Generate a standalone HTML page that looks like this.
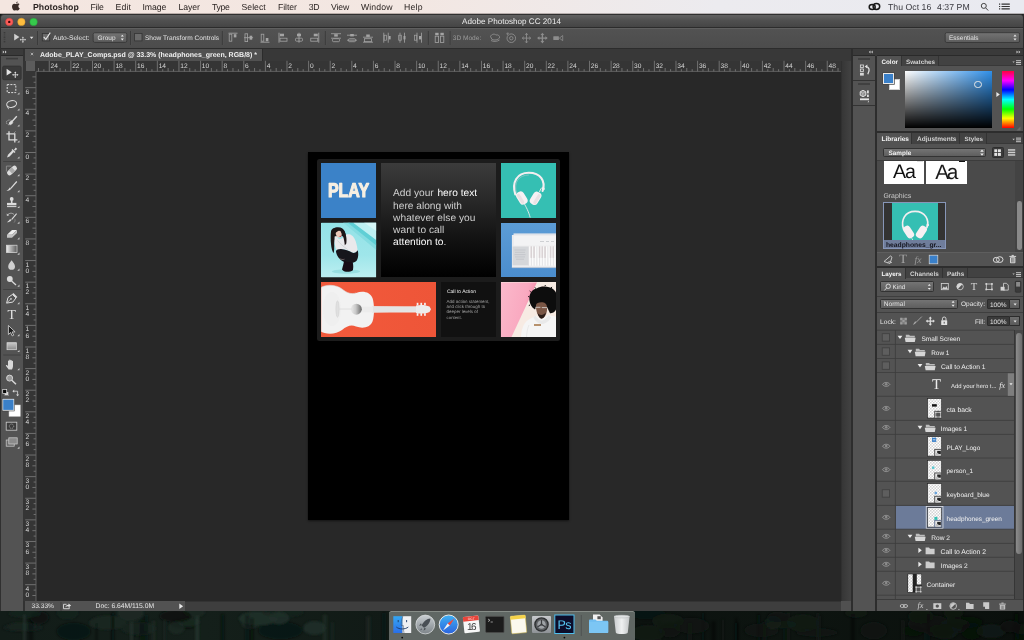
<!DOCTYPE html>
<html lang="en"><head><meta charset="utf-8"><title>Adobe Photoshop CC 2014</title>
<style>
html,body{margin:0;padding:0;}
body{text-rendering:geometricPrecision;width:1024px;height:640px;overflow:hidden;position:relative;background:#0d1512;font-family:"Liberation Sans",sans-serif;}
.b{position:absolute;box-sizing:border-box;}
.f{font-family:'Liberation Sans',sans-serif;white-space:pre;}
.fs{font-family:'Liberation Serif',serif;white-space:pre;}
svg{position:absolute;left:0;top:0;overflow:visible;}
</style></head><body>
<div class="b" style="left:0;top:600px;width:1024px;height:40px;background:linear-gradient(90deg,#121c18 0%,#141f1a 20%,#111a16 38%,#0c120f 62%,#0d1410 78%,#0a0f0c 100%);"></div>
<svg width="1024" height="640" viewBox="0 0 1024 640"><defs><filter id="tb" x="-5%" y="-50%" width="110%" height="200%"><feGaussianBlur stdDeviation="1.300"/></filter><clipPath id="cbg"><rect x="0" y="610" width="1024" height="30"/></clipPath></defs><g clip-path="url(#cbg)"><g filter="url(#tb)"><ellipse cx="954.9" cy="624.9" rx="14.5" ry="6.5" fill="#131e17" opacity="0.81"/><ellipse cx="184.4" cy="623.9" rx="14.3" ry="4.7" fill="#0a100e" opacity="0.74"/><ellipse cx="761.4" cy="630.3" rx="17.1" ry="7.1" fill="#111a14" opacity="0.48"/><ellipse cx="188.6" cy="622.2" rx="11.4" ry="4.2" fill="#1c2c24" opacity="0.72"/><ellipse cx="193.9" cy="612.1" rx="11.3" ry="5.5" fill="#1b2a24" opacity="0.66"/><ellipse cx="280.4" cy="630.5" rx="22.0" ry="9.0" fill="#0a100e" opacity="0.56"/><ellipse cx="781.3" cy="624.4" rx="15.2" ry="4.1" fill="#111a14" opacity="0.63"/><ellipse cx="873.8" cy="630.6" rx="13.4" ry="8.8" fill="#111a14" opacity="0.55"/><ellipse cx="957.8" cy="627.6" rx="8.7" ry="5.9" fill="#0f1813" opacity="0.48"/><ellipse cx="647.2" cy="613.9" rx="18.9" ry="5.3" fill="#0e1511" opacity="0.46"/><ellipse cx="953.5" cy="612.2" rx="9.9" ry="7.5" fill="#0f1813" opacity="0.81"/><ellipse cx="175.5" cy="616.2" rx="15.8" ry="6.2" fill="#0a100e" opacity="0.80"/><ellipse cx="1023.6" cy="633.4" rx="8.0" ry="8.3" fill="#090e0b" opacity="0.59"/><ellipse cx="913.8" cy="630.8" rx="10.9" ry="6.0" fill="#090e0b" opacity="0.50"/><ellipse cx="1022.8" cy="629.0" rx="11.0" ry="5.3" fill="#0e1511" opacity="0.82"/><ellipse cx="67.5" cy="612.3" rx="10.9" ry="7.2" fill="#172520" opacity="0.62"/><ellipse cx="991.3" cy="631.1" rx="14.8" ry="6.9" fill="#131e17" opacity="0.73"/><ellipse cx="314.5" cy="628.0" rx="11.2" ry="7.1" fill="#20312a" opacity="0.78"/><ellipse cx="971.8" cy="631.4" rx="10.8" ry="8.8" fill="#090e0b" opacity="0.49"/><ellipse cx="39.5" cy="617.6" rx="9.5" ry="6.6" fill="#0a100e" opacity="0.77"/><ellipse cx="258.3" cy="618.5" rx="19.5" ry="7.0" fill="#20312a" opacity="0.87"/><ellipse cx="1010.2" cy="626.4" rx="9.8" ry="6.4" fill="#090e0b" opacity="0.73"/><ellipse cx="282.5" cy="612.4" rx="20.8" ry="5.0" fill="#172520" opacity="0.64"/><ellipse cx="250.0" cy="623.7" rx="8.7" ry="5.4" fill="#20312a" opacity="0.49"/><ellipse cx="134.5" cy="628.1" rx="14.3" ry="5.7" fill="#15211d" opacity="0.71"/><ellipse cx="136.5" cy="632.0" rx="8.5" ry="4.1" fill="#0a100e" opacity="0.59"/><ellipse cx="25.0" cy="613.5" rx="16.4" ry="4.4" fill="#172520" opacity="0.59"/><ellipse cx="1033.3" cy="628.2" rx="9.1" ry="6.7" fill="#131e17" opacity="0.81"/><ellipse cx="945.3" cy="631.8" rx="12.9" ry="7.4" fill="#0f1813" opacity="0.87"/><ellipse cx="21.6" cy="626.6" rx="15.0" ry="4.1" fill="#1c2c24" opacity="0.71"/><ellipse cx="73.7" cy="631.4" rx="17.0" ry="9.0" fill="#0a100e" opacity="0.60"/><ellipse cx="965.4" cy="622.2" rx="17.7" ry="6.3" fill="#090e0b" opacity="0.49"/><ellipse cx="773.2" cy="622.6" rx="8.4" ry="7.0" fill="#131e17" opacity="0.88"/><ellipse cx="107.9" cy="622.7" rx="18.9" ry="7.3" fill="#1b2a24" opacity="0.62"/><ellipse cx="139.5" cy="628.6" rx="16.6" ry="6.6" fill="#172520" opacity="0.75"/><ellipse cx="921.0" cy="616.4" rx="12.6" ry="7.3" fill="#0f1813" opacity="0.81"/><ellipse cx="777.8" cy="616.8" rx="10.8" ry="5.1" fill="#0e1511" opacity="0.54"/><ellipse cx="130.5" cy="612.9" rx="12.9" ry="8.5" fill="#1b2a24" opacity="0.88"/><ellipse cx="279.0" cy="618.1" rx="10.4" ry="6.3" fill="#20312a" opacity="0.82"/><ellipse cx="691.7" cy="625.7" rx="18.0" ry="8.2" fill="#0e1511" opacity="0.48"/><ellipse cx="22.9" cy="627.6" rx="20.2" ry="4.2" fill="#15211d" opacity="0.61"/><ellipse cx="667.9" cy="620.9" rx="15.9" ry="7.2" fill="#131e17" opacity="0.46"/><ellipse cx="856.2" cy="613.0" rx="11.3" ry="4.7" fill="#111a14" opacity="0.65"/><ellipse cx="647.7" cy="633.1" rx="17.2" ry="8.0" fill="#131e17" opacity="0.54"/><ellipse cx="176.5" cy="627.7" rx="8.2" ry="6.4" fill="#20312a" opacity="0.55"/><ellipse cx="802.8" cy="623.0" rx="15.6" ry="8.7" fill="#131e17" opacity="0.63"/><ellipse cx="816.8" cy="632.5" rx="20.7" ry="4.4" fill="#0f1813" opacity="0.51"/><ellipse cx="940.0" cy="631.3" rx="13.3" ry="6.8" fill="#0e1511" opacity="0.66"/><ellipse cx="670.0" cy="630.0" rx="10.9" ry="7.6" fill="#111a14" opacity="0.55"/><ellipse cx="929.6" cy="623.8" rx="21.7" ry="8.9" fill="#0e1511" opacity="0.57"/><rect x="735.5" y="618.1" width="1.6" height="30" fill="#0c1512" opacity="0.54"/><rect x="786.7" y="612.3" width="3.2" height="30" fill="#141d17" opacity="0.37"/><rect x="819.1" y="616.0" width="2.1" height="30" fill="#141d17" opacity="0.40"/><rect x="152.2" y="620.7" width="3.3" height="30" fill="#222f29" opacity="0.50"/><rect x="901.1" y="620.3" width="3.5" height="30" fill="#141d17" opacity="0.50"/><rect x="851.1" y="614.0" width="3.5" height="30" fill="#080d0b" opacity="0.44"/><rect x="687.4" y="622.4" width="4.8" height="30" fill="#141d17" opacity="0.46"/><rect x="144.5" y="615.3" width="3.4" height="30" fill="#0c1512" opacity="0.54"/><rect x="28.4" y="618.2" width="4.9" height="30" fill="#080d0b" opacity="0.39"/><rect x="95.5" y="623.2" width="2.1" height="30" fill="#0c1512" opacity="0.44"/><rect x="130.0" y="621.8" width="3.0" height="30" fill="#2d3c35" opacity="0.53"/><rect x="111.2" y="612.4" width="3.0" height="30" fill="#080d0b" opacity="0.62"/><rect x="23.3" y="614.7" width="2.2" height="30" fill="#2d3c35" opacity="0.60"/><rect x="250.3" y="618.0" width="3.2" height="30" fill="#080d0b" opacity="0.57"/><rect x="734.9" y="622.5" width="4.0" height="30" fill="#080d0b" opacity="0.49"/><rect x="163.6" y="619.6" width="2.2" height="30" fill="#222f29" opacity="0.43"/><rect x="139.7" y="619.5" width="4.7" height="30" fill="#0a100e" opacity="0.46"/><rect x="322.5" y="614.6" width="4.7" height="30" fill="#28362f" opacity="0.40"/><rect x="245.1" y="615.1" width="4.0" height="30" fill="#0c1512" opacity="0.54"/><rect x="721.8" y="619.5" width="2.2" height="30" fill="#141d17" opacity="0.38"/><rect x="366.2" y="616.3" width="4.4" height="30" fill="#222f29" opacity="0.62"/><rect x="702.1" y="612.8" width="2.2" height="30" fill="#0a100e" opacity="0.62"/><rect x="926.8" y="614.3" width="3.2" height="30" fill="#0a100e" opacity="0.64"/><rect x="1014.1" y="613.1" width="4.7" height="30" fill="#080d0b" opacity="0.51"/><rect x="783.1" y="617.6" width="2.6" height="30" fill="#0c1512" opacity="0.42"/><rect x="382.1" y="612.5" width="3.7" height="30" fill="#0c1512" opacity="0.51"/><rect x="757.1" y="614.3" width="2.9" height="30" fill="#080d0b" opacity="0.63"/><rect x="331.5" y="622.1" width="1.8" height="30" fill="#222f29" opacity="0.68"/><rect x="195.5" y="616.1" width="3.5" height="30" fill="#2d3c35" opacity="0.67"/><rect x="762.3" y="621.8" width="4.2" height="30" fill="#0c1512" opacity="0.66"/><rect x="711.5" y="621.2" width="4.2" height="30" fill="#080d0b" opacity="0.41"/><rect x="816.5" y="613.2" width="2.6" height="30" fill="#141d17" opacity="0.70"/><rect x="924.4" y="615.3" width="1.7" height="30" fill="#141d17" opacity="0.45"/><rect x="221.2" y="614.2" width="2.9" height="30" fill="#080d0b" opacity="0.70"/><rect x="657.7" y="621.1" width="4.0" height="30" fill="#141d17" opacity="0.36"/></g></g></svg>
<div class="b" style="left:0.00px;top:0.00px;width:1024.00px;height:14.00px;background:linear-gradient(90deg,#f4e6e0 0%,#f3e7e2 40%,#ecebef 70%,#e9eaf0 100%);"></div>
<div class="b" style="left:0.00px;top:13.00px;width:1024.00px;height:1.00px;background:rgba(70,58,55,0.33);"></div>
<svg width="1024" height="14" viewBox="0 0 1024 14"><g fill="#3a2c27"><path d="M17.9 3.6c-.8 0-1.4.5-1.9.5s-1-.45-1.7-.45c-1.2 0-2.3 1-2.3 2.9 0 1.8 1.2 4 2.300 4 .6 0 .9-.4 1.700-.4s1 .4 1.700.4c.9 0 1.700-1.300 2.100-2.300-1-.45-1.400-1.300-1.400-2.100 0-.9.500-1.600 1.200-2-.5-.500-1.100-.55-1.700-.55z"/><path d="M16.100 3.200c.1-.9.800-1.700 1.600-1.800.1.900-.7 1.800-1.600 1.800z"/></g></svg>
<svg width="1024" height="14" viewBox="0 0 1024 14">
<g fill="none" stroke="#1a1a1a" stroke-width="1.5"><ellipse cx="872.2" cy="6.9" rx="3" ry="2.5"/><ellipse cx="876.4" cy="6.500" rx="3.300" ry="2.900"/></g>
<g fill="none" stroke="#444" stroke-width="1"><circle cx="983.800" cy="5.900" r="2.500"/><path d="M985.600 7.800l2.600 2.700"/></g>
<g stroke="#333" stroke-width="1.1"><path d="M1001.500 4.100h8.300M1001.500 6.500h8.300M1001.500 8.900h8.300"/><path d="M999 4.100h1.200M999 6.500h1.200M999 8.900h1.200"/></g>
</svg>
<div class="b" style="left:0.00px;top:14.00px;width:1024.00px;height:597.00px;background:#303030;border-radius:3.500px 3.500px 0 0;"></div>
<div class="b" style="left:0.60px;top:15.00px;width:1022.80px;height:12.00px;background:linear-gradient(180deg,#626262 0%,#505050 45%,#454545 100%);border-radius:3px 3px 0 0;"></div>
<svg width="1024" height="640" viewBox="0 0 1024 640"><circle cx="9.250" cy="21.900" r="3.700" fill="#fb5c58" stroke="#d9443f" stroke-width=".5"/><circle cx="9.250" cy="21.900" r="1.200" fill="#3b0608"/><circle cx="21.400" cy="21.900" r="3.700" fill="#fdbd3f" stroke="#de9f2c" stroke-width=".5"/><circle cx="33.600" cy="21.900" r="3.700" fill="#36c94c" stroke="#27aa3a" stroke-width=".5"/></svg>
<div class="b" style="left:0.60px;top:27.60px;width:1022.80px;height:20.40px;background:linear-gradient(180deg,#525252 0%,#4c4c4c 100%);border-top:0.6px solid #5f5f5f;"></div>
<div class="b" style="left:0.60px;top:27.00px;width:1022.80px;height:0.60px;background:#2c2c2c;"></div>
<svg width="1024" height="50" viewBox="0 0 1024 50"><g fill="#3a3a3a"><rect x="3.700" y="32" width="1.6" height="1.400"/><rect x="3.700" y="36.5" width="1.6" height="1.400"/><rect x="3.700" y="41" width="1.6" height="1.400"/><rect x="3.700" y="34.200" width="1.6" height="1.400" opacity=".6"/><rect x="3.700" y="38.700" width="1.6" height="1.400" opacity=".6"/></g><g transform="translate(14.2,33.7) scale(1.0)" fill="#d0d0d0" stroke="none"><path d="M0 0 L0 6.800 L5.200 3.400 Z"/><path d="M6.399999999999999 6.0H11.0M8.7 3.7V8.3" stroke="#d0d0d0" stroke-width=".8" fill="none"/><path d="M5.499999999999999 6.0l1.300-1.100v2.200zM11.9 6.0l-1.300-1.100v2.200zM8.7 2.8000000000000003l-1.100 1.300h2.200zM8.7 9.200000000000001l-1.100-1.300h2.200z"/></g><path d="M29.800 36.800h3.600l-1.800 2.200z" fill="#e0e0e0"/><rect x="37.0" y="31" width="0.9" height="14" fill="#383838"/><rect x="37.9" y="31" width="0.6" height="14" fill="#5a5a5a" opacity=".6"/><rect x="130.0" y="31" width="0.9" height="14" fill="#383838"/><rect x="130.9" y="31" width="0.6" height="14" fill="#5a5a5a" opacity=".6"/><rect x="221.9" y="31" width="0.9" height="14" fill="#383838"/><rect x="222.8" y="31" width="0.6" height="14" fill="#5a5a5a" opacity=".6"/><rect x="324.9" y="31" width="0.9" height="14" fill="#383838"/><rect x="325.79999999999995" y="31" width="0.6" height="14" fill="#5a5a5a" opacity=".6"/><rect x="427.9" y="31" width="0.9" height="14" fill="#383838"/><rect x="428.79999999999995" y="31" width="0.6" height="14" fill="#5a5a5a" opacity=".6"/><rect x="449.75" y="31" width="0.9" height="14" fill="#383838"/><rect x="450.65" y="31" width="0.6" height="14" fill="#5a5a5a" opacity=".6"/><rect x="42.300" y="33.5" width="7.400" height="7.400" fill="#6a6a6a" stroke="#333" stroke-width=".8"/><path d="M43.700 36.900l2.100 2.500 4.500-6.800" fill="none" stroke="#e6e6e6" stroke-width="1.050"/><rect x="134.600" y="33.5" width="7.400" height="7.400" fill="#6a6a6a" stroke="#333" stroke-width=".8"/><defs><linearGradient id="dd" x1="0" y1="0" x2="0" y2="1"><stop offset="0" stop-color="#747474"/><stop offset="1" stop-color="#5c5c5c"/></linearGradient></defs><rect x="93.200" y="32.800" width="33.600" height="9.600" rx="1.5" fill="url(#dd)" stroke="#333" stroke-width=".8"/><path d="M120.800 36.600l1.500-1.900 1.500 1.900zM120.800 38.600l1.500 1.900 1.500-1.900z" fill="#ededed"/><path d="M228.5 33.2h9" stroke="#a4a4a4" stroke-width=".9"/><rect x="229.2" y="34.2" width="2.600" height="7" fill="none" stroke="#a4a4a4" stroke-width=".8"/><rect x="233.8" y="34.2" width="2.600" height="3.200" fill="#a4a4a4"/><path d="M244.1 37.7h9" stroke="#a4a4a4" stroke-width=".9"/><rect x="245.0" y="33.800000000000004" width="2.600" height="7.800" fill="none" stroke="#a4a4a4" stroke-width=".8"/><rect x="249.6" y="35.7" width="2.600" height="4" fill="#a4a4a4"/><path d="M260.5 42.2h9" stroke="#a4a4a4" stroke-width=".9"/><rect x="261.2" y="34.2" width="2.600" height="7" fill="none" stroke="#a4a4a4" stroke-width=".8"/><rect x="265.8" y="38.0" width="2.600" height="3.200" fill="#a4a4a4"/><path d="M279 32.7v10" stroke="#a4a4a4" stroke-width=".9"/><rect x="280" y="33.7" width="4" height="2.600" fill="#a4a4a4"/><rect x="280" y="38.2" width="7" height="3" fill="none" stroke="#a4a4a4" stroke-width=".8"/><path d="M299 32.7v10" stroke="#a4a4a4" stroke-width=".9"/><rect x="297" y="33.7" width="4" height="2.600" fill="#a4a4a4"/><rect x="295.5" y="38.2" width="7" height="3" rx="1" fill="none" stroke="#a4a4a4" stroke-width=".8"/><path d="M318.75 32.7v10" stroke="#a4a4a4" stroke-width=".9"/><rect x="313.75" y="33.7" width="4" height="2.600" fill="#a4a4a4"/><rect x="310.75" y="38.2" width="7" height="3" fill="none" stroke="#a4a4a4" stroke-width=".8"/><path d="M331 33.7h10M331 38.2h10" stroke="#a4a4a4" stroke-width=".8"/><rect x="334.2" y="34.2" width="3.600" height="2.400" fill="#a4a4a4"/><rect x="332.5" y="38.7" width="7" height="3" rx="1" fill="none" stroke="#a4a4a4" stroke-width=".8"/><path d="M347 35.2h10M347 40.2h10" stroke="#a4a4a4" stroke-width=".8"/><rect x="350.2" y="34.0" width="3.600" height="2.400" fill="#a4a4a4"/><rect x="348.5" y="38.7" width="7" height="3" rx="1" fill="none" stroke="#a4a4a4" stroke-width=".8"/><path d="M363 37.2h10M363 42.2h10" stroke="#a4a4a4" stroke-width=".8"/><rect x="366.2" y="34.5" width="3.600" height="2.400" fill="#a4a4a4"/><rect x="364.5" y="38.7" width="7" height="3" fill="none" stroke="#a4a4a4" stroke-width=".8"/><path d="M383.75 32.7v10M388.25 32.7v10" stroke="#a4a4a4" stroke-width=".8"/><rect x="384.15" y="35.2" width="2.400" height="5" fill="none" stroke="#a4a4a4" stroke-width=".7"/><rect x="388.65" y="36.0" width="2" height="3.400" fill="#a4a4a4"/><path d="M400 32.7v10M404.5 32.7v10" stroke="#a4a4a4" stroke-width=".8"/><rect x="398.7" y="35.2" width="2.600" height="5" fill="none" stroke="#a4a4a4" stroke-width=".7"/><rect x="403.5" y="36.0" width="2" height="3.400" fill="#a4a4a4"/><path d="M417 32.7v10M421.5 32.7v10" stroke="#a4a4a4" stroke-width=".8"/><rect x="414.4" y="35.2" width="2.400" height="5" fill="none" stroke="#a4a4a4" stroke-width=".7"/><rect x="419" y="36.0" width="2.200" height="3.400" fill="#a4a4a4"/><rect x="435.2" y="32.800000000000004" width="3.400" height="2.400" fill="#a4a4a4"/><rect x="440.4" y="32.800000000000004" width="3.400" height="2.400" fill="#a4a4a4"/><rect x="435.2" y="36.2" width="3.400" height="6.200" fill="none" stroke="#a4a4a4" stroke-width=".8"/><rect x="440.4" y="36.2" width="3.400" height="6.200" fill="none" stroke="#a4a4a4" stroke-width=".8"/><g fill="none" stroke="#8d8d8d" stroke-width=".9"><path d="M490.500 36.500c1-2.500 4-3 5.500-1.500 2-.7 4 .8 3.500 3-1.500 2-5 2.500-7.500 1.500z"/><path d="M491 40.500c2 1.300 6 1.300 8.500-.5"/><circle cx="511.300" cy="38.200" r="4.300"/><circle cx="511.300" cy="38.200" r="1.700"/><path d="M507.500 35l-.6-1.900 2 .2"/><path d="M526.500 33.300v9.600M522.300 38.100h8.400M526.500 33.300l-1.300 1.500M526.500 33.300l1.300 1.500M526.500 42.900l-1.300-1.500M526.500 42.900l1.300-1.500M522.300 38.100l1.500-1.300M522.300 38.100l1.500 1.300M530.700 38.100l-1.500-1.300M530.700 38.100l-1.500 1.300"/></g><g fill="#8d8d8d"><path d="M542.400 32.800l1.900 2.300h-1.200v2.300h2.300v-1.200l2.300 1.900-2.300 1.900v-1.200h-2.300v2.300h1.200l-1.900 2.300-1.900-2.300h1.200v-2.300h-2.300v1.200l-2.300-1.900 2.300-1.900v1.200h2.300v-2.300h-1.200z"/><rect x="553.300" y="36.200" width="5.600" height="3.800" rx=".5"/><path d="M559.400 38.100l3.300-2.600v5.200z" fill="none" stroke="#8d8d8d" stroke-width=".8"/></g><rect x="945.200" y="32.700" width="74.400" height="9.800" rx="1.5" fill="url(#dd)" stroke="#333" stroke-width=".8"/><path d="M1013.500 36.500l1.500-1.900 1.500 1.900zM1013.500 38.600l1.500 1.900 1.500-1.900z" fill="#ededed"/></svg>
<div class="b" style="left:0.60px;top:48.00px;width:22.70px;height:563.00px;background:#535353;"></div>
<div class="b" style="left:0.60px;top:48.00px;width:22.70px;height:7.80px;background:#3a3a3a;border-bottom:0.7px solid #2a2a2a;"></div>
<div class="b" style="left:23.30px;top:48.00px;width:1.90px;height:563.00px;background:#323232;"></div>
<div class="b" style="left:25.20px;top:48.00px;width:825.80px;height:12.80px;background:#383838;"></div>
<div class="b" style="left:25.20px;top:48.60px;width:238.20px;height:12.20px;background:#515151;border-right:0.8px solid #2c2c2c;"></div>
<div class="b" style="left:25.20px;top:48.00px;width:825.80px;height:0.70px;background:#2c2c2c;"></div>
<div class="b" style="left:25.20px;top:60.80px;width:815.80px;height:11.00px;background:#353535;"></div>
<div class="b" style="left:23.30px;top:60.80px;width:12.90px;height:540.20px;background:#353535;"></div>
<div class="b" style="left:25.80px;top:61.30px;width:9.40px;height:9.30px;background:#5c5c5c;"></div>
<div class="b" style="left:841.30px;top:60.80px;width:9.70px;height:11.00px;background:#454545;"></div>
<div class="b" style="left:36.00px;top:71.80px;width:805.00px;height:529.20px;background:#282828;"></div>
<div class="b" style="left:841.00px;top:60.80px;width:10.00px;height:540.20px;background:linear-gradient(90deg,#363636,#424242);border-left:0.6px solid #303030;"></div>
<div class="b" style="left:25.20px;top:601.00px;width:825.80px;height:10.00px;background:#3e3e3e;border-top:0.6px solid #333;"></div>
<div class="b" style="left:25.20px;top:601.40px;width:159.80px;height:9.60px;background:#525252;"></div>
<div class="b" style="left:841.00px;top:601.00px;width:10.00px;height:10.00px;background:#505050;"></div>
<div class="b" style="left:851.00px;top:48.00px;width:2.00px;height:563.00px;background:#2d2d2d;"></div>
<svg width="1024" height="640" viewBox="0 0 1024 640"><g stroke="#8a8a8a" stroke-width="0.7"><path d="M38.48 68.00V71.400"/><path d="M43.88 69.20V71.400"/><path d="M49.28 60.80V71.400"/><path d="M54.68 69.20V71.400"/><path d="M60.09 68.00V71.400"/><path d="M65.49 69.20V71.400"/><path d="M70.89 60.80V71.400"/><path d="M76.29 69.20V71.400"/><path d="M81.70 68.00V71.400"/><path d="M87.10 69.20V71.400"/><path d="M92.50 60.80V71.400"/><path d="M97.90 69.20V71.400"/><path d="M103.31 68.00V71.400"/><path d="M108.71 69.20V71.400"/><path d="M114.11 60.80V71.400"/><path d="M119.51 69.20V71.400"/><path d="M124.92 68.00V71.400"/><path d="M130.32 69.20V71.400"/><path d="M135.72 60.80V71.400"/><path d="M141.12 69.20V71.400"/><path d="M146.53 68.00V71.400"/><path d="M151.93 69.20V71.400"/><path d="M157.33 60.80V71.400"/><path d="M162.73 69.20V71.400"/><path d="M168.14 68.00V71.400"/><path d="M173.54 69.20V71.400"/><path d="M178.94 60.80V71.400"/><path d="M184.34 69.20V71.400"/><path d="M189.75 68.00V71.400"/><path d="M195.15 69.20V71.400"/><path d="M200.55 60.80V71.400"/><path d="M205.95 69.20V71.400"/><path d="M211.36 68.00V71.400"/><path d="M216.76 69.20V71.400"/><path d="M222.16 60.80V71.400"/><path d="M227.56 69.20V71.400"/><path d="M232.97 68.00V71.400"/><path d="M238.37 69.20V71.400"/><path d="M243.77 60.80V71.400"/><path d="M249.17 69.20V71.400"/><path d="M254.58 68.00V71.400"/><path d="M259.98 69.20V71.400"/><path d="M265.38 60.80V71.400"/><path d="M270.78 69.20V71.400"/><path d="M276.19 68.00V71.400"/><path d="M281.59 69.20V71.400"/><path d="M286.99 60.80V71.400"/><path d="M292.39 69.20V71.400"/><path d="M297.80 68.00V71.400"/><path d="M303.20 69.20V71.400"/><path d="M308.60 60.80V71.400"/><path d="M314.00 69.20V71.400"/><path d="M319.41 68.00V71.400"/><path d="M324.81 69.20V71.400"/><path d="M330.21 60.80V71.400"/><path d="M335.61 69.20V71.400"/><path d="M341.02 68.00V71.400"/><path d="M346.42 69.20V71.400"/><path d="M351.82 60.80V71.400"/><path d="M357.22 69.20V71.400"/><path d="M362.62 68.00V71.400"/><path d="M368.03 69.20V71.400"/><path d="M373.43 60.80V71.400"/><path d="M378.83 69.20V71.400"/><path d="M384.24 68.00V71.400"/><path d="M389.64 69.20V71.400"/><path d="M395.04 60.80V71.400"/><path d="M400.44 69.20V71.400"/><path d="M405.85 68.00V71.400"/><path d="M411.25 69.20V71.400"/><path d="M416.65 60.80V71.400"/><path d="M422.05 69.20V71.400"/><path d="M427.46 68.00V71.400"/><path d="M432.86 69.20V71.400"/><path d="M438.26 60.80V71.400"/><path d="M443.66 69.20V71.400"/><path d="M449.07 68.00V71.400"/><path d="M454.47 69.20V71.400"/><path d="M459.87 60.80V71.400"/><path d="M465.27 69.20V71.400"/><path d="M470.68 68.00V71.400"/><path d="M476.08 69.20V71.400"/><path d="M481.48 60.80V71.400"/><path d="M486.88 69.20V71.400"/><path d="M492.29 68.00V71.400"/><path d="M497.69 69.20V71.400"/><path d="M503.09 60.80V71.400"/><path d="M508.49 69.20V71.400"/><path d="M513.89 68.00V71.400"/><path d="M519.30 69.20V71.400"/><path d="M524.70 60.80V71.400"/><path d="M530.10 69.20V71.400"/><path d="M535.50 68.00V71.400"/><path d="M540.91 69.20V71.400"/><path d="M546.31 60.80V71.400"/><path d="M551.71 69.20V71.400"/><path d="M557.12 68.00V71.400"/><path d="M562.52 69.20V71.400"/><path d="M567.92 60.80V71.400"/><path d="M573.32 69.20V71.400"/><path d="M578.73 68.00V71.400"/><path d="M584.13 69.20V71.400"/><path d="M589.53 60.80V71.400"/><path d="M594.93 69.20V71.400"/><path d="M600.34 68.00V71.400"/><path d="M605.74 69.20V71.400"/><path d="M611.14 60.80V71.400"/><path d="M616.54 69.20V71.400"/><path d="M621.94 68.00V71.400"/><path d="M627.35 69.20V71.400"/><path d="M632.75 60.80V71.400"/><path d="M638.15 69.20V71.400"/><path d="M643.56 68.00V71.400"/><path d="M648.96 69.20V71.400"/><path d="M654.36 60.80V71.400"/><path d="M659.76 69.20V71.400"/><path d="M665.16 68.00V71.400"/><path d="M670.57 69.20V71.400"/><path d="M675.97 60.80V71.400"/><path d="M681.37 69.20V71.400"/><path d="M686.78 68.00V71.400"/><path d="M692.18 69.20V71.400"/><path d="M697.58 60.80V71.400"/><path d="M702.98 69.20V71.400"/><path d="M708.38 68.00V71.400"/><path d="M713.79 69.20V71.400"/><path d="M719.19 60.80V71.400"/><path d="M724.59 69.20V71.400"/><path d="M730.00 68.00V71.400"/><path d="M735.40 69.20V71.400"/><path d="M740.80 60.80V71.400"/><path d="M746.20 69.20V71.400"/><path d="M751.61 68.00V71.400"/><path d="M757.01 69.20V71.400"/><path d="M762.41 60.80V71.400"/><path d="M767.81 69.20V71.400"/><path d="M773.22 68.00V71.400"/><path d="M778.62 69.20V71.400"/><path d="M784.02 60.80V71.400"/><path d="M789.42 69.20V71.400"/><path d="M794.83 68.00V71.400"/><path d="M800.23 69.20V71.400"/><path d="M805.63 60.80V71.400"/><path d="M811.03 69.20V71.400"/><path d="M816.43 68.00V71.400"/><path d="M821.84 69.20V71.400"/><path d="M827.24 60.80V71.400"/><path d="M832.64 69.20V71.400"/><path d="M838.04 68.00V71.400"/><path d="M32.40 76.87H35.800"/><path d="M33.60 82.27H35.800"/><path d="M25.20 87.67H35.800"/><path d="M33.60 93.07H35.800"/><path d="M32.40 98.47H35.800"/><path d="M33.60 103.88H35.800"/><path d="M25.20 109.28H35.800"/><path d="M33.60 114.68H35.800"/><path d="M32.40 120.09H35.800"/><path d="M33.60 125.49H35.800"/><path d="M25.20 130.89H35.800"/><path d="M33.60 136.29H35.800"/><path d="M32.40 141.69H35.800"/><path d="M33.60 147.10H35.800"/><path d="M25.20 152.50H35.800"/><path d="M33.60 157.90H35.800"/><path d="M32.40 163.31H35.800"/><path d="M33.60 168.71H35.800"/><path d="M25.20 174.11H35.800"/><path d="M33.60 179.51H35.800"/><path d="M32.40 184.91H35.800"/><path d="M33.60 190.32H35.800"/><path d="M25.20 195.72H35.800"/><path d="M33.60 201.12H35.800"/><path d="M32.40 206.53H35.800"/><path d="M33.60 211.93H35.800"/><path d="M25.20 217.33H35.800"/><path d="M33.60 222.73H35.800"/><path d="M32.40 228.13H35.800"/><path d="M33.60 233.54H35.800"/><path d="M25.20 238.94H35.800"/><path d="M33.60 244.34H35.800"/><path d="M32.40 249.75H35.800"/><path d="M33.60 255.15H35.800"/><path d="M25.20 260.55H35.800"/><path d="M33.60 265.95H35.800"/><path d="M32.40 271.36H35.800"/><path d="M33.60 276.76H35.800"/><path d="M25.20 282.16H35.800"/><path d="M33.60 287.56H35.800"/><path d="M32.40 292.97H35.800"/><path d="M33.60 298.37H35.800"/><path d="M25.20 303.77H35.800"/><path d="M33.60 309.17H35.800"/><path d="M32.40 314.57H35.800"/><path d="M33.60 319.98H35.800"/><path d="M25.20 325.38H35.800"/><path d="M33.60 330.78H35.800"/><path d="M32.40 336.19H35.800"/><path d="M33.60 341.59H35.800"/><path d="M25.20 346.99H35.800"/><path d="M33.60 352.39H35.800"/><path d="M32.40 357.79H35.800"/><path d="M33.60 363.20H35.800"/><path d="M25.20 368.60H35.800"/><path d="M33.60 374.00H35.800"/><path d="M32.40 379.40H35.800"/><path d="M33.60 384.81H35.800"/><path d="M25.20 390.21H35.800"/><path d="M33.60 395.61H35.800"/><path d="M32.40 401.01H35.800"/><path d="M33.60 406.42H35.800"/><path d="M25.20 411.82H35.800"/><path d="M33.60 417.22H35.800"/><path d="M32.40 422.62H35.800"/><path d="M33.60 428.03H35.800"/><path d="M25.20 433.43H35.800"/><path d="M33.60 438.83H35.800"/><path d="M32.40 444.24H35.800"/><path d="M33.60 449.64H35.800"/><path d="M25.20 455.04H35.800"/><path d="M33.60 460.44H35.800"/><path d="M32.40 465.84H35.800"/><path d="M33.60 471.25H35.800"/><path d="M25.20 476.65H35.800"/><path d="M33.60 482.05H35.800"/><path d="M32.40 487.45H35.800"/><path d="M33.60 492.86H35.800"/><path d="M25.20 498.26H35.800"/><path d="M33.60 503.66H35.800"/><path d="M32.40 509.06H35.800"/><path d="M33.60 514.47H35.800"/><path d="M25.20 519.87H35.800"/><path d="M33.60 525.27H35.800"/><path d="M32.40 530.67H35.800"/><path d="M33.60 536.08H35.800"/><path d="M25.20 541.48H35.800"/><path d="M33.60 546.88H35.800"/><path d="M32.40 552.28H35.800"/><path d="M33.60 557.69H35.800"/><path d="M25.20 563.09H35.800"/><path d="M33.60 568.49H35.800"/><path d="M32.40 573.89H35.800"/><path d="M33.60 579.30H35.800"/><path d="M25.20 584.70H35.800"/><path d="M33.60 590.10H35.800"/><path d="M32.40 595.50H35.800"/></g><path d="M36.200 71.400H841" stroke="#777" stroke-width=".6"/><path d="M36 71.800V601" stroke="#777" stroke-width=".7"/></svg>
<svg width="1024" height="640" viewBox="0 0 1024 640"><path d="M61 602v9" stroke="#3a3a3a" stroke-width=".8"/><g fill="none" stroke="#d8d8d8" stroke-width=".9"><path d="M66.500 604.300h-3v4.400h5.800v-1.500"/></g><path d="M65.300 607.500c.3-2 1.600-2.800 3.200-2.800v-1.200l2.600 2-2.600 2v-1.200c-1.400 0-2.400.2-3.200 1.200z" fill="#e0e0e0"/><path d="M179.300 603.500l3.800 2.700-3.800 2.700z" fill="#e8e8e8"/></svg>
<div class="b" style="left:308.40px;top:152.40px;width:260.40px;height:367.85px;background:#000;box-shadow:0 0.6px 2px rgba(0,0,0,.55);"></div>
<div class="b" style="left:317.40px;top:159.30px;width:242.80px;height:181.90px;background:#1c1c1c;border-radius:2.500px;"></div>
<div class="b" style="left:380.80px;top:162.60px;width:115.20px;height:114.60px;background:linear-gradient(180deg,#3b3b3b 0%,#2a2a2a 30%,#101010 70%,#000 100%);"></div>
<div class="b" style="left:321.20px;top:162.50px;width:55.10px;height:55.00px;background:#3b82c8;"></div>
<div class="b" style="left:500.80px;top:162.50px;width:55.20px;height:55.00px;background:#35bfb3;"></div>
<div class="b" style="left:321.20px;top:222.60px;width:55.10px;height:54.90px;background:#a5e6ea;"></div>
<div class="b" style="left:500.80px;top:222.60px;width:55.20px;height:54.90px;background:linear-gradient(180deg,#5c9cd6,#4b8dcd);"></div>
<div class="b" style="left:321.20px;top:282.20px;width:114.80px;height:54.80px;background:linear-gradient(90deg,#f25a3c,#ee5538);"></div>
<div class="b" style="left:441.00px;top:282.20px;width:55.00px;height:54.80px;background:#111;"></div>
<div class="b" style="left:500.80px;top:282.20px;width:55.20px;height:54.80px;background:#f7ebe3;"></div>
<svg width="1024" height="640" viewBox="0 0 1024 640"><defs><clipPath id="cHP"><rect x="500.800" y="162.500" width="55.200" height="55"/></clipPath><clipPath id="cP1"><rect x="321.200" y="222.600" width="55.100" height="54.900"/></clipPath><clipPath id="cKB"><rect x="500.800" y="222.600" width="55.200" height="54.900"/></clipPath><clipPath id="cGT"><rect x="321.200" y="282.200" width="114.800" height="54.800"/></clipPath><clipPath id="cP2"><rect x="500.800" y="282.200" width="55.200" height="54.800"/></clipPath><linearGradient id="pk" x1="0" y1="0" x2="1" y2="0.35"><stop offset="0" stop-color="#fbb9cb"/><stop offset=".7" stop-color="#f9a9c0"/><stop offset="1" stop-color="#f48aa6"/></linearGradient><linearGradient id="hole" x1="0" y1="0" x2="1" y2="0"><stop offset="0" stop-color="#ececec"/><stop offset=".45" stop-color="#c8c8c8"/><stop offset="1" stop-color="#6a6a6a"/></linearGradient><linearGradient id="p1bg" x1="0" y1="0" x2="0" y2="1"><stop offset="0" stop-color="#93e2e7"/><stop offset=".6" stop-color="#9fe6ea"/><stop offset="1" stop-color="#bdeff1"/></linearGradient><filter id="bl1"><feGaussianBlur stdDeviation="0.35"/></filter></defs><g clip-path="url(#cHP)" filter="url(#bl1)"><path d="M515.300 194.500 C511.500 182 517 172.800 528.800 172.800 C540.500 172.800 546 181 542.600 191" fill="none" stroke="#f3eef0" stroke-width="2.100" stroke-linecap="round"/><path d="M516.600 193 C513.500 183 518.500 175 528.800 175" fill="none" stroke="#d9cfd3" stroke-width=".6" opacity=".7"/><circle cx="543.300" cy="188.700" r="1.500" fill="#f5f0f2"/><path d="M539.500 192 C540.500 189 541.500 187.500 543 187" fill="none" stroke="#efe8ea" stroke-width="1"/><g transform="rotate(-32 521.800 198)"><rect x="517.600" y="191.200" width="8.400" height="13.600" rx="3.600" fill="#f6f1f3"/><rect x="518.700" y="192.400" width="3.200" height="11.200" rx="1.600" fill="#e4dadd" opacity=".7"/></g><g transform="rotate(32 535.600 198.300)"><rect x="531.400" y="191.500" width="8.400" height="13.600" rx="3.600" fill="#f6f1f3"/><rect x="535.600" y="192.700" width="3.200" height="11.200" rx="1.600" fill="#e4dadd" opacity=".7"/></g><path d="M524.200 203.500 C526 207 528.500 211 530.300 218" fill="none" stroke="#f1ecee" stroke-width=".9"/></g><g clip-path="url(#cP1)"><rect x="321.200" y="222.600" width="55.100" height="54.900" fill="url(#p1bg)"/><g filter="url(#bl1)"><path d="M343 222.600 L350 222.600 L376.300 243.500 L376.300 250 Z" fill="#84dce1"/><path d="M347.500 222.600 L353 222.600 L376.300 240 L376.300 245.500 Z" fill="#5fcfd5"/><path d="M353 222.600 L376.300 222.600 L376.300 240 Z" fill="#bdf0f2"/><path d="M364 222.600 L376.300 222.600 L376.300 231 Z" fill="#d6f7f7"/><ellipse cx="346" cy="271.500" rx="14" ry="2.200" fill="#7fd2d6" opacity=".55"/><path d="M331 231.500 C331.300 228.600 334.500 227.300 338 227.200 C341.500 227.200 344 229 344.900 231.800 C346 235 346.600 240 346.200 243.600 L344.800 245 C344.300 241.500 343.600 238.500 342.600 236 L336 236.200 C335 238.500 334.300 241.500 334.200 245 C334.200 248 334.300 251 333.500 253.200 C332.300 251.500 331.400 248 331 244 C330.500 239.500 330.600 234.500 331 231.500Z" fill="#1b1317"/><path d="M334.600 236.500 C336 235.600 337.600 236.500 338.200 238.500 C340 239.600 342.500 238.600 343.800 236.300 C345.500 234.400 348.500 233.900 350.800 234.800 C353.800 236.200 355.600 240 356.600 244.500 C357.200 247 357.500 249 357.500 250.600 C356 252.600 353.800 253.200 352 252.500 C349.500 251 346.500 249.600 343.500 249.300 C341 249.100 338.600 249.600 336.800 250 C335.200 247.500 334.500 243.500 334.500 240.500Z" fill="#e9e9eb"/><path d="M337.500 240.500 C340 243.500 343.500 246.500 347.500 249.500" fill="none" stroke="#c9cdd0" stroke-width=".7"/><ellipse cx="338.700" cy="233.900" rx="2.900" ry="3.700" fill="#ebc7b8" transform="rotate(-14 338.700 233.900)"/><path d="M334 231.500 C335.200 228.600 340.500 227.800 343.200 230.400 C340.800 230 338 230.500 335.400 233Z" fill="#1b1317"/><ellipse cx="340.300" cy="236.300" rx="1" ry=".6" fill="#d23a4a"/><path d="M342.800 229.800 C344.800 231 346 234.500 346.400 238 C346.600 240.500 346.500 242.500 346.200 243.800 L344.800 245.200 C344.500 242 343.900 239 343.200 236.800 C342.700 235 342.200 233.500 341.800 232.500Z" fill="#1b1317"/><path d="M336 251 C336.500 249.600 338.500 248.900 341 249 C345 249.200 349 250.800 352 252.600 C354 253.600 356.500 252.400 357.700 250.300 C358.600 253.500 358.400 257.500 356.600 260.800 C354.800 262.800 351 263.400 347.500 263 C344.500 262.500 341.500 261 339.500 258.800 C337.500 256.500 336 253.500 336 251Z" fill="#17131a"/><path d="M339.500 258.500 C341 259.500 343 259.800 344.500 259.200" fill="none" stroke="#8a7f80" stroke-width=".7"/><path d="M344 261.300 C346.500 262.300 350 262.700 352.700 262.300 C353.400 265 353.400 268 352.900 270.200 C351 271.600 348.500 271.900 346 271.700 C344.300 271.500 342.800 270.800 342 269.500 C342.600 267 343.600 264 344 261.300Z" fill="#120f14"/></g></g><g clip-path="url(#cKB)" filter="url(#bl1)"><rect x="513.500" y="233.400" width="45" height="4" fill="#dfe3ea"/><rect x="511.900" y="235" width="46" height="32.600" fill="#ececee"/><rect x="514" y="236" width="44" height="9.500" fill="#f3f3f4"/><rect x="512.600" y="246.500" width="15.600" height="18.800" fill="#d5d7da"/><g stroke="#b4b7bc" stroke-width=".5"><path d="M514.500 250h11M515 252.300h10M514.500 254.600h11M515 256.900h10M516 259.200h8"/></g><rect x="528.600" y="246.400" width="29" height="19.200" fill="#fbfbfb"/><g stroke="#c9c9cc" stroke-width=".5"><path d="M528.60 246.400V265.600"/><path d="M531.35 246.400V265.600"/><path d="M534.10 246.400V265.600"/><path d="M536.85 246.400V265.600"/><path d="M539.60 246.400V265.600"/><path d="M542.35 246.400V265.600"/><path d="M545.10 246.400V265.600"/><path d="M547.85 246.400V265.600"/><path d="M550.60 246.400V265.600"/><path d="M553.35 246.400V265.600"/><path d="M556.10 246.400V265.600"/></g><g fill="#d9d2d4"><rect x="530.50" y="246.400" width="1.600" height="11.500"/><rect x="533.25" y="246.400" width="1.600" height="11.500"/><rect x="538.75" y="246.400" width="1.600" height="11.500"/><rect x="541.50" y="246.400" width="1.600" height="11.500"/><rect x="544.25" y="246.400" width="1.600" height="11.500"/><rect x="549.75" y="246.400" width="1.600" height="11.500"/><rect x="552.50" y="246.400" width="1.600" height="11.500"/></g><path d="M511.900 267.600H557" stroke="#c2c8d2" stroke-width=".8"/><g fill="#c5c7cb"><rect x="540" y="241" width="4" height=".8"/><rect x="546" y="241" width="3" height=".8"/><rect x="551" y="241" width="3" height=".8"/></g></g><g clip-path="url(#cGT)" filter="url(#bl1)"><path d="M320 288 C326 284 336 284.500 342 289 C347 293 351 294.500 356 293 C363 290.500 370 292 372.500 298 C374.500 304 374.500 316 372.500 321.500 C370 327.500 363 329 356 326.500 C351 324.500 347 326 342 330 C336 334.500 326 335 320 331Z" fill="#f2f2f2"/><path d="M320 288 C326 284 336 284.500 342 289 C347 293 351 294.500 356 293" fill="none" stroke="#dcdcdc" stroke-width=".6"/><ellipse cx="332" cy="309" rx="9" ry="17" fill="#e6e6e6" opacity=".25"/><rect x="372" y="306.300" width="45" height="6.200" fill="#e9e9e9"/><path d="M372 306.300 L416.500 307.300 L416.500 311.300 L372 312.500Z" fill="#e4e4e4"/><path d="M356 306.600 H373 V312.200 H356Z" fill="#ececec"/><circle cx="356.300" cy="309.200" r="5.500" fill="url(#hole)"/><ellipse cx="337.500" cy="309" rx="1.600" ry="8.200" fill="#e0e0e0" stroke="#cfcfcf" stroke-width=".5"/><path d="M339 309 H352" stroke="#dadada" stroke-width=".8"/><path d="M416 305.500 C420 304.500 426 304.800 429.500 306.500 L431 309.200 L429.500 312 C426 313.600 420 314 416 313Z" fill="#ededed"/><g fill="#f4f4f4"><rect x="416.700" y="302.800" width="1.700" height="2.600"/><rect x="420.400" y="302.800" width="1.700" height="2.600"/><rect x="424.100" y="302.800" width="1.700" height="2.600"/><rect x="416.700" y="313.200" width="1.700" height="2.600"/><rect x="420.400" y="313.200" width="1.700" height="2.600"/><rect x="424.100" y="313.200" width="1.700" height="2.600"/></g></g><g clip-path="url(#cP2)"><path d="M500.800 282.200 H537 L511.500 337 H500.800Z" fill="url(#pk)"/><g filter="url(#bl1)"><path d="M529.400 300.500 C528.600 294 532 289.500 537 288.200 C541 285.800 549.500 286 553.500 289.500 C557.500 292.500 558.600 300.500 557.200 306.500 C556 311 553.400 313.600 550 313.200 L547 307 L536 307 L535 309.500 C531.500 307.500 529.900 304 529.400 300.500Z" fill="#0e0c0d"/><path d="M529.300 297l-1.200-.6M530.800 292l-1.100-1M535.500 288.500l-.5-1.100M530 305l-1.200.6M545 286.200l.4-1.200M551 288l1-1.100" stroke="#0e0c0d" stroke-width="1"/><path d="M521 337 C521.500 329 523.500 322.500 529 319.500 L536 315.500 L541.500 319.500 L548 315 L553 316 L557 317 V337Z" fill="#f5f5f5"/><path d="M535.500 315.500 C537 318.500 540 320.500 541.800 320.500 C544 320.500 547 318 548.500 315 L551 317.500 C549 321.500 545 324 541.800 324 C538.500 324 535 321 533.500 317.500Z" fill="#e9e9e9"/><path d="M526.500 337 C527 331 527.600 328 529 325" stroke="#dedede" stroke-width=".6" fill="none"/><path d="M536 305 C536.400 302.600 540 301.800 543.500 302.400 C546.400 303 547.400 306 547 310 C546.500 314.500 544.500 318.200 541.500 318.200 C538.500 317.800 535.600 311.500 536 305Z" fill="#7a5645"/><path d="M537.600 313 C539 315.500 543.500 315.800 545.800 312.600 C545.400 316.200 543.400 318.800 541.500 318.800 C539.800 318.600 538.200 316 537.600 313Z" fill="#2a1c18"/><path d="M535.400 307.300h5M541.800 307.600h5.200" stroke="#cfc8c6" stroke-width=".9"/><rect x="534" y="324.200" width="7" height="1.600" fill="#a97a4e"/></g></g></svg>
<div class="b" style="left:853.00px;top:48.00px;width:22.00px;height:563.00px;background:#535353;"></div>
<div class="b" style="left:875.00px;top:48.00px;width:2.00px;height:563.00px;background:#2d2d2d;"></div>
<div class="b" style="left:853.00px;top:48.00px;width:170.40px;height:7.80px;background:#3a3a3a;"></div>
<div class="b" style="left:877.00px;top:48.00px;width:146.40px;height:563.00px;background:#535353;"></div>
<div class="b" style="left:1023.40px;top:14.00px;width:0.60px;height:597.00px;background:#2a2a2a;"></div>
<div class="b" style="left:853.00px;top:48.00px;width:22.00px;height:7.80px;background:#3a3a3a;border-bottom:0.7px solid #2a2a2a;"></div>
<div class="b" style="left:877.00px;top:48.00px;width:146.40px;height:7.80px;background:#3a3a3a;border-bottom:0.7px solid #2a2a2a;"></div>
<div class="b" style="left:0.60px;top:48.00px;width:1022.80px;height:0.70px;background:#2c2c2c;"></div>
<div class="b" style="left:853.00px;top:79.80px;width:22.00px;height:1.40px;background:#333;"></div>
<div class="b" style="left:853.00px;top:104.60px;width:22.00px;height:1.40px;background:#333;"></div>
<div class="b" style="left:877.00px;top:56.00px;width:146.40px;height:9.60px;background:#424242;border-bottom:0.7px solid #383838;"></div>
<div class="b" style="left:877.00px;top:56.00px;width:25.00px;height:10.20px;background:#535353;border-right:0.7px solid #333;"></div>
<div class="b" style="left:902.00px;top:56.00px;width:37.00px;height:9.60px;background:#424242;border-right:0.7px solid #333;"></div>
<div class="b" style="left:877.00px;top:131.20px;width:146.40px;height:2.00px;background:#2d2d2d;"></div>
<div class="b" style="left:904.800px;top:70.600px;width:87.400px;height:57px;background:linear-gradient(180deg,rgba(0,0,0,0) 0%,#000 100%),linear-gradient(90deg,#fff 0%,#2f8fe8 100%);"></div>
<div class="b" style="left:1002px;top:70.600px;width:11.800px;height:57px;background:linear-gradient(180deg,#ff0040 0%,#ff00ff 17%,#0000ff 33%,#00ffff 50%,#00ff00 67%,#ffff00 83%,#ff0000 100%);"></div>
<div class="b" style="left:974.100px;top:80.600px;width:7.600px;height:7.600px;border-radius:50%;border:0.9px solid #e8e8e8;"></div>
<div class="b" style="left:888.80px;top:78.60px;width:11.40px;height:11.60px;background:#fff;border:0.6px solid #d0d0d0;"></div>
<div class="b" style="left:882.60px;top:72.60px;width:11.80px;height:11.80px;background:#3a80c9;border:1px solid #e8e8e8;box-shadow:0 0 0 0.7px #444;"></div>
<svg width="1024" height="640" viewBox="0 0 1024 640"><path d="M996.400 92l3.400 2.500-3.400 2.500z" fill="#e6e6e6"/><path d="M1016.500 130.500l4-4v4z" fill="#6a6a6a"/></svg>
<div class="b" style="left:877.00px;top:133.20px;width:146.40px;height:10.40px;background:#424242;border-bottom:0.7px solid #383838;"></div>
<div class="b" style="left:877.00px;top:133.20px;width:35.00px;height:11.00px;background:#535353;border-right:0.7px solid #333;"></div>
<div class="b" style="left:912.00px;top:133.20px;width:48.00px;height:10.40px;background:#424242;border-right:0.7px solid #333;"></div>
<div class="b" style="left:960.00px;top:133.20px;width:27.00px;height:10.40px;background:#424242;border-right:0.7px solid #333;"></div>
<div class="b" style="left:877.00px;top:160.00px;width:146.40px;height:91.60px;background:#4a4a4a;border-top:0.7px solid #3c3c3c;"></div>
<div class="b" style="left:1015.00px;top:160.60px;width:8.40px;height:91.00px;background:#434343;"></div>
<div class="b" style="left:1017.00px;top:200.60px;width:4.60px;height:49.20px;background:#8a8a8a;border-radius:2.300px;"></div>
<div class="b" style="left:877.00px;top:251.60px;width:146.40px;height:14.60px;background:#535353;border-top:0.7px solid #5e5e5e;"></div>
<div class="b" style="left:877.00px;top:266.20px;width:146.40px;height:1.60px;background:#2d2d2d;"></div>
<div class="b" style="left:882.800px;top:147.800px;width:103px;height:9.400px;border-radius:1.500px;background:linear-gradient(180deg,#747474,#5e5e5e);border:0.7px solid #333;"></div>
<div class="b" style="left:991.60px;top:147.40px;width:12.00px;height:10.20px;background:#3a3a3a;border-radius:1.500px;border:0.7px solid #2e2e2e;"></div>
<div class="b" style="left:883.80px;top:161.00px;width:40.20px;height:23.00px;background:#fff;"></div>
<div class="b" style="left:926.00px;top:161.00px;width:41.00px;height:23.00px;background:#fff;"></div>
<div class="b" style="left:917.00px;top:161.00px;width:5.60px;height:1.00px;background:#ddd;"></div>
<div class="b" style="left:959.40px;top:161.00px;width:6.00px;height:1.40px;background:#111;"></div>
<div class="b" style="left:883.00px;top:202.00px;width:63.00px;height:47.00px;background:#6f7d9b;border:0.8px solid #8796b8;"></div>
<div class="b" style="left:884.00px;top:203.00px;width:61.00px;height:37.00px;background:#333;"></div>
<div class="b" style="left:891.80px;top:203.00px;width:46.60px;height:37.00px;background:#35bfb3;"></div>
<svg width="1024" height="640" viewBox="0 0 1024 640"><g filter="url(#bl1)"><path d="M903.500 229 C900.500 220 905 211.400 915.100 211.400 C925.200 211.400 929.700 220 926.900 227.500" fill="none" stroke="#f3eef0" stroke-width="1.700" stroke-linecap="round"/><g transform="rotate(-33 908.600 232)"><rect x="904.800" y="225.400" width="7.600" height="13.200" rx="3.300" fill="#f6f1f3"/></g><g transform="rotate(33 921.400 232)"><rect x="917.600" y="225.400" width="7.600" height="13.200" rx="3.300" fill="#f6f1f3"/></g><circle cx="927.800" cy="225" r="1.200" fill="#f3eef0"/><path d="M910.500 236.500 C911.500 238 912.300 239 912.800 240" fill="none" stroke="#f1ecee" stroke-width=".8"/></g><g fill="#e4e4e4"><rect x="994.300" y="149.300" width="2.900" height="2.900"/><rect x="998" y="149.300" width="2.900" height="2.900"/><rect x="994.300" y="153" width="2.900" height="2.900"/><rect x="998" y="153" width="2.900" height="2.900"/></g><g fill="#cfcfcf"><rect x="1008" y="149.200" width="7.200" height="1.500"/><rect x="1008" y="151.700" width="7.200" height="1.500"/><rect x="1008" y="154.200" width="7.200" height="1.500"/></g><path d="M980.200 151.700l1.800-2.200 1.800 2.200zM980.200 153.500l1.800 2.200 1.800-2.200z" fill="#ededed"/><g fill="none" stroke="#cfcfcf" stroke-width=".9"><path d="M884 261.500l6.500-5.500 1.500 1.200-2 6.300z"/><path d="M887.500 262.800c1-1.500 3.500-1.500 4.300.2"/></g><rect x="929.200" y="255.200" width="8.600" height="8.600" fill="#3a80c9" stroke="#d8d8d8" stroke-width=".7"/><g fill="none" stroke="#dadada" stroke-width="1"><ellipse cx="996.300" cy="259.900" rx="3" ry="2.500"/><ellipse cx="999.700" cy="259.600" rx="3.300" ry="2.900"/></g><g fill="#d6d6d6"><rect x="1010" y="257.300" width="5.400" height="6" rx=".8"/><rect x="1009.300" y="255.900" width="6.800" height="1"/><rect x="1011.600" y="254.900" width="2.200" height="1"/></g><g stroke="#5a5a5a" stroke-width=".6"><path d="M1011.500 258v4.500M1012.700 258v4.500M1013.900 258v4.500"/></g></svg>
<div class="b" style="left:877.00px;top:267.80px;width:146.40px;height:10.40px;background:#424242;border-bottom:0.7px solid #383838;"></div>
<div class="b" style="left:877.00px;top:267.80px;width:29.00px;height:11.00px;background:#535353;border-right:0.7px solid #333;"></div>
<div class="b" style="left:906.00px;top:267.80px;width:36.50px;height:10.40px;background:#424242;border-right:0.7px solid #333;"></div>
<div class="b" style="left:942.50px;top:267.80px;width:25.50px;height:10.40px;background:#424242;border-right:0.7px solid #333;"></div>
<div class="b" style="left:877.00px;top:295.70px;width:146.40px;height:0.80px;background:#3e3e3e;"></div>
<div class="b" style="left:877.00px;top:312.20px;width:146.40px;height:0.80px;background:#3e3e3e;"></div>
<div class="b" style="left:879.600px;top:281.400px;width:54.400px;height:11px;border-radius:1.500px;background:linear-gradient(180deg,#747474,#5e5e5e);border:0.7px solid #333;"></div>
<div class="b" style="left:879.600px;top:298.500px;width:78.200px;height:10.600px;border-radius:1.500px;background:linear-gradient(180deg,#747474,#5e5e5e);border:0.7px solid #333;"></div>
<div class="b" style="left:987.00px;top:299.00px;width:23.00px;height:10.20px;background:#3a3a3a;border:0.7px solid #2c2c2c;border-radius:1px 0 0 1px;"></div>
<div class="b" style="left:1010.00px;top:299.00px;width:10.20px;height:10.20px;background:linear-gradient(180deg,#6e6e6e,#5a5a5a);border:0.7px solid #2c2c2c;border-left:none;border-radius:0 1px 1px 0;"></div>
<div class="b" style="left:987.00px;top:316.00px;width:23.00px;height:10.20px;background:#3a3a3a;border:0.7px solid #2c2c2c;border-radius:1px 0 0 1px;"></div>
<div class="b" style="left:1010.00px;top:316.00px;width:10.20px;height:10.20px;background:linear-gradient(180deg,#6e6e6e,#5a5a5a);border:0.7px solid #2c2c2c;border-left:none;border-radius:0 1px 1px 0;"></div>
<div class="b" style="left:877.00px;top:330.20px;width:137.00px;height:268.80px;background:#535353;"></div>
<div class="b" style="left:1014.20px;top:330.20px;width:9.20px;height:268.80px;background:#474747;border-left:1.5px solid #363636;"></div>
<div class="b" style="left:1016.20px;top:332.50px;width:6.20px;height:221.50px;background:linear-gradient(90deg,#8c8c8c,#6c6c6c);border-radius:3px;"></div>
<div class="b" style="left:877.00px;top:599.00px;width:146.40px;height:12.00px;background:#535353;border-top:0.7px solid #3c3c3c;"></div>
<svg width="1024" height="640" viewBox="0 0 1024 640"><defs><pattern id="chk" width="3" height="3" patternUnits="userSpaceOnUse"><rect width="3" height="3" fill="#fff"/><rect width="1.500" height="1.500" fill="#d4d4d4"/><rect x="1.500" y="1.500" width="1.500" height="1.500" fill="#d4d4d4"/></pattern></defs><path d="M877 330.2H1014" stroke="#3c3c3c" stroke-width=".8"/><rect x="882.200" y="333.69999999999993" width="7.400" height="7.400" fill="#5e5e5e" stroke="#3f3f3f" stroke-width=".8"/><path d="M897.6 335.69999999999993h4.800l-2.400 3.400z" fill="#ececec"/><path d="M905.8000000000001 334.69999999999993h3.200l1 1.100h4.800v1.600h-9z" fill="#bcbcbc"/><path d="M904.8000000000001 337.69999999999993h10.800l-.8 4.300h-9.200z" fill="#d6d6d6"/><path d="M877 344.4H1014" stroke="#3c3c3c" stroke-width=".8"/><rect x="882.200" y="347.84999999999997" width="7.400" height="7.400" fill="#5e5e5e" stroke="#3f3f3f" stroke-width=".8"/><path d="M907.6 349.84999999999997h4.800l-2.400 3.400z" fill="#ececec"/><path d="M915.8000000000001 348.84999999999997h3.200l1 1.100h4.800v1.600h-9z" fill="#bcbcbc"/><path d="M914.8000000000001 351.84999999999997h10.800l-.8 4.300h-9.200z" fill="#d6d6d6"/><path d="M877 358.5H1014" stroke="#3c3c3c" stroke-width=".8"/><rect x="882.200" y="361.9" width="7.400" height="7.400" fill="#5e5e5e" stroke="#3f3f3f" stroke-width=".8"/><path d="M917.6 363.9h4.800l-2.400 3.400z" fill="#ececec"/><path d="M925.8000000000001 362.9h3.200l1 1.100h4.800v1.600h-9z" fill="#bcbcbc"/><path d="M924.8000000000001 365.9h10.800l-.8 4.300h-9.200z" fill="#d6d6d6"/><path d="M877 372.5H1014" stroke="#3c3c3c" stroke-width=".8"/><path d="M882.5 384.4 C884.2 381.79999999999995 888.2 381.79999999999995 889.9000000000001 384.4 C888.2 387.0 884.2 387.0 882.5 384.4Z" fill="none" stroke="#a2a2a2" stroke-width=".8"/><circle cx="886.2" cy="384.2" r="1.300" fill="#8c8c8c"/><path d="M877 396.3H1014" stroke="#3c3c3c" stroke-width=".8"/><path d="M882.5 408.35 C884.2 405.75 888.2 405.75 889.9000000000001 408.35 C888.2 410.95000000000005 884.2 410.95000000000005 882.5 408.35Z" fill="none" stroke="#a2a2a2" stroke-width=".8"/><circle cx="886.2" cy="408.15000000000003" r="1.300" fill="#8c8c8c"/><rect x="927.6" y="398.6" width="14" height="19.400" fill="url(#chk)" stroke="#222" stroke-width=".6"/><rect x="934.2" y="410.8" width="7.400" height="7.200" fill="#535353"/><rect x="932.0" y="404.20000000000005" width="4.800" height="2.400" fill="#111"/><rect x="935.8000000000001" y="412.40000000000003" width="4.600" height="4.600" fill="none" stroke="#d0d0d0" stroke-width=".7"/><g fill="#d0d0d0"><rect x="935.1" y="411.70000000000005" width="1.400" height="1.400"/><rect x="939.7" y="411.70000000000005" width="1.400" height="1.400"/><rect x="935.1" y="416.3" width="1.400" height="1.400"/><rect x="939.7" y="416.3" width="1.400" height="1.400"/></g><path d="M877 420.4H1014" stroke="#3c3c3c" stroke-width=".8"/><path d="M882.5 427.4 C884.2 424.79999999999995 888.2 424.79999999999995 889.9000000000001 427.4 C888.2 430.0 884.2 430.0 882.5 427.4Z" fill="none" stroke="#a2a2a2" stroke-width=".8"/><circle cx="886.2" cy="427.2" r="1.300" fill="#8c8c8c"/><path d="M917.6 425.79999999999995h4.800l-2.400 3.400z" fill="#ececec"/><path d="M925.8000000000001 424.79999999999995h3.200l1 1.100h4.800v1.600h-9z" fill="#bcbcbc"/><path d="M924.8000000000001 427.79999999999995h10.800l-.8 4.300h-9.200z" fill="#d6d6d6"/><path d="M877 434.4H1014" stroke="#3c3c3c" stroke-width=".8"/><path d="M882.5 446.2 C884.2 443.59999999999997 888.2 443.59999999999997 889.9000000000001 446.2 C888.2 448.8 884.2 448.8 882.5 446.2Z" fill="none" stroke="#a2a2a2" stroke-width=".8"/><circle cx="886.2" cy="446.0" r="1.300" fill="#8c8c8c"/><rect x="927.6" y="436.7" width="14" height="19.400" fill="url(#chk)" stroke="#222" stroke-width=".6"/><rect x="934.2" y="448.9" width="7.400" height="7.200" fill="#535353"/><rect x="932.0" y="437.7" width="4.200" height="4.200" fill="#3a80c9"/><rect x="932.8000000000001" y="439.5" width="2.600" height=".7" fill="#fff"/><rect x="935.2" y="449.9" width="5.600" height="5.800" fill="#e4e4e4"/><rect x="937.2" y="450.9" width="3.600" height="3.200" fill="#222"/><rect x="936.0" y="453.09999999999997" width="2.400" height="2.600" fill="#bdbdbd"/><path d="M877 458H1014" stroke="#3c3c3c" stroke-width=".8"/><path d="M882.5 469.65 C884.2 467.04999999999995 888.2 467.04999999999995 889.9000000000001 469.65 C888.2 472.25 884.2 472.25 882.5 469.65Z" fill="none" stroke="#a2a2a2" stroke-width=".8"/><circle cx="886.2" cy="469.45" r="1.300" fill="#8c8c8c"/><rect x="927.6" y="460.3" width="14" height="19.400" fill="url(#chk)" stroke="#222" stroke-width=".6"/><rect x="934.2" y="472.5" width="7.400" height="7.200" fill="#535353"/><rect x="932.0" y="466.5" width="2.400" height="2.400" fill="#58c8d0"/><rect x="935.2" y="473.5" width="5.600" height="5.800" fill="#e4e4e4"/><rect x="937.2" y="474.5" width="3.600" height="3.200" fill="#222"/><rect x="936.0" y="476.7" width="2.400" height="2.600" fill="#bdbdbd"/><path d="M877 481.3H1014" stroke="#3c3c3c" stroke-width=".8"/><rect x="882.200" y="489.75" width="7.400" height="7.400" fill="#5e5e5e" stroke="#3f3f3f" stroke-width=".8"/><rect x="927.6" y="483.6" width="14" height="19.400" fill="url(#chk)" stroke="#222" stroke-width=".6"/><rect x="934.2" y="495.8" width="7.400" height="7.200" fill="#535353"/><rect x="934.6" y="491.8" width="2.400" height="2.400" fill="#6aa4dc"/><rect x="935.2" y="496.8" width="5.600" height="5.800" fill="#e4e4e4"/><rect x="937.2" y="497.8" width="3.600" height="3.200" fill="#222"/><rect x="936.0" y="500.0" width="2.400" height="2.600" fill="#bdbdbd"/><rect x="896" y="505.79999999999995" width="118" height="23.40000000000007" fill="#6c7b99"/><path d="M877 505.4H1014" stroke="#3c3c3c" stroke-width=".8"/><path d="M882.5 517.3 C884.2 514.6999999999999 888.2 514.6999999999999 889.9000000000001 517.3 C888.2 519.9 884.2 519.9 882.5 517.3Z" fill="none" stroke="#a2a2a2" stroke-width=".8"/><circle cx="886.2" cy="517.0999999999999" r="1.300" fill="#8c8c8c"/><rect x="926.2" y="506.5" width="16.800" height="22" fill="none" stroke="#e8e8e8" stroke-width=".7"/><rect x="927.6" y="507.7" width="14" height="19.400" fill="url(#chk)" stroke="#222" stroke-width=".6"/><rect x="934.2" y="519.9" width="7.400" height="7.200" fill="#6c7b99"/><rect x="934.4" y="516.9" width="3" height="3" fill="#35bfb3"/><rect x="935.2" y="520.9" width="5.600" height="5.800" fill="#e4e4e4"/><rect x="937.2" y="521.9" width="3.600" height="3.200" fill="#222"/><rect x="936.0" y="524.1" width="2.400" height="2.600" fill="#bdbdbd"/><path d="M877 529.2H1014" stroke="#3c3c3c" stroke-width=".8"/><path d="M882.5 536.3 C884.2 533.6999999999999 888.2 533.6999999999999 889.9000000000001 536.3 C888.2 538.9 884.2 538.9 882.5 536.3Z" fill="none" stroke="#a2a2a2" stroke-width=".8"/><circle cx="886.2" cy="536.0999999999999" r="1.300" fill="#8c8c8c"/><path d="M907.6 534.6999999999999h4.800l-2.400 3.400z" fill="#ececec"/><path d="M915.8000000000001 533.7h3.200l1 1.100h4.800v1.600h-9z" fill="#bcbcbc"/><path d="M914.8000000000001 536.7h10.800l-.8 4.300h-9.200z" fill="#d6d6d6"/><path d="M877 543.4H1014" stroke="#3c3c3c" stroke-width=".8"/><path d="M882.5 550.3499999999999 C884.2 547.7499999999999 888.2 547.7499999999999 889.9000000000001 550.3499999999999 C888.2 552.9499999999999 884.2 552.9499999999999 882.5 550.3499999999999Z" fill="none" stroke="#a2a2a2" stroke-width=".8"/><circle cx="886.2" cy="550.1499999999999" r="1.300" fill="#8c8c8c"/><path d="M918.4 547.7499999999999l3.400 2.600-3.400 2.600z" fill="#ececec"/><path d="M925.6 547.55h3.400l1 1.100h4.600v5.700h-9z" fill="#cdcdcd"/><path d="M877 557.3H1014" stroke="#3c3c3c" stroke-width=".8"/><path d="M882.5 564.3 C884.2 561.6999999999999 888.2 561.6999999999999 889.9000000000001 564.3 C888.2 566.9 884.2 566.9 882.5 564.3Z" fill="none" stroke="#a2a2a2" stroke-width=".8"/><circle cx="886.2" cy="564.0999999999999" r="1.300" fill="#8c8c8c"/><path d="M918.4 561.6999999999999l3.400 2.600-3.400 2.600z" fill="#ececec"/><path d="M925.6 561.5h3.400l1 1.100h4.600v5.700h-9z" fill="#cdcdcd"/><path d="M877 571.3H1014" stroke="#3c3c3c" stroke-width=".8"/><path d="M882.5 583.25 C884.2 580.65 888.2 580.65 889.9000000000001 583.25 C888.2 585.85 884.2 585.85 882.5 583.25Z" fill="none" stroke="#a2a2a2" stroke-width=".8"/><circle cx="886.2" cy="583.05" r="1.300" fill="#8c8c8c"/><rect x="907.6" y="573.8" width="14.200" height="18.800" fill="#222"/><rect x="908.1" y="574.3" width="4.600" height="17.800" fill="url(#chk)"/><rect x="916.8000000000001" y="574.3" width="4.500" height="10.200" fill="url(#chk)"/><rect x="915.0" y="585.8" width="6.800" height="6.800" fill="#535353"/><rect x="916.2" y="587.1999999999999" width="4.600" height="4.600" fill="none" stroke="#d0d0d0" stroke-width=".7"/><g fill="#d0d0d0"><rect x="915.5" y="586.5" width="1.400" height="1.400"/><rect x="920.1" y="586.5" width="1.400" height="1.400"/><rect x="915.5" y="591.0999999999999" width="1.400" height="1.400"/><rect x="920.1" y="591.0999999999999" width="1.400" height="1.400"/></g><path d="M877 595.200H1014" stroke="#3c3c3c" stroke-width=".8"/><path d="M895.400 330.200V599" stroke="#3c3c3c" stroke-width=".8"/><g fill="none" stroke="#e0e0e0" stroke-width=".9"><circle cx="888.200" cy="286.300" r="2.200"/><path d="M886.600 288l-2.200 2.400"/></g><path d="M927.800 285.800l1.500-1.900 1.500 1.900zM927.800 287.900l1.500 1.900 1.500-1.900z" fill="#ededed"/><path d="M951.600 302.700l1.500-1.900 1.500 1.900zM951.600 304.800l1.500 1.900 1.500-1.900z" fill="#ededed"/><path d="M1013.600 303.600h3l-1.500 1.800zM1013.600 320.600h3l-1.500 1.800z" fill="#ececec"/><g fill="none" stroke="#d6d6d6" stroke-width=".8"><rect x="941.300" y="283.500" width="7" height="6.200"/><circle cx="960.100" cy="286.600" r="3.200"/><rect x="986.300" y="284" width="5.600" height="5.400"/></g><path d="M942 289l1.800-2.400 1.300 1.400 1.200-2 1.500 3z" fill="#d6d6d6"/><path d="M957.800 288.900a3.200 3.200 0 0 1 4.600-4.600z" fill="#d6d6d6"/><g fill="#d6d6d6"><rect x="985.400" y="283.100" width="1.700" height="1.700"/><rect x="991.100" y="283.100" width="1.700" height="1.700"/><rect x="985.400" y="288.600" width="1.700" height="1.700"/><rect x="991.100" y="288.600" width="1.700" height="1.700"/></g><path d="M1003.500 283.300h3l1.800 1.800v5h-4.800z" fill="none" stroke="#d6d6d6" stroke-width=".8"/><rect x="1000.600" y="286.800" width="4" height="3.800" fill="#d6d6d6"/><rect x="1015.300" y="281.300" width="5.600" height="11" rx=".8" fill="#3a3a3a" stroke="#2c2c2c" stroke-width=".6"/><rect x="1016.100" y="282" width="4" height="4.600" fill="#8a8a8a"/><g fill="#8a8a8a"><rect x="900.200" y="317.800" width="6.600" height="6.600" fill="#7a7a7a"/><rect x="900.200" y="317.800" width="2.200" height="2.200" fill="#9c9c9c"/><rect x="904.600" y="317.800" width="2.200" height="2.200" fill="#9c9c9c"/><rect x="902.400" y="320" width="2.200" height="2.200" fill="#9c9c9c"/><rect x="900.200" y="322.200" width="2.200" height="2.200" fill="#9c9c9c"/><rect x="904.600" y="322.200" width="2.200" height="2.200" fill="#9c9c9c"/></g><path d="M921.800 316.600l-5.800 5.800" stroke="#a8a8a8" stroke-width=".9"/><path d="M912.800 324.600c1.400-.2 2.600-1 3.600-2.400l-1.300-1c-.8 1.400-1.600 2.500-2.300 3.400z" fill="#a8a8a8"/><path d="M930.300 316.500l1.700 2h-1.100v2h2v-1.100l2 1.700-2 1.700v-1.100h-2v2h1.100l-1.700 2-1.700-2h1.100v-2h-2v1.100l-2-1.700 2-1.700v1.100h2v-2h-1.100z" fill="#dedede"/><rect x="941.200" y="320.300" width="6" height="4.600" rx=".5" fill="#e2e2e2"/><path d="M942.400 320.300v-1.500a1.800 1.800 0 0 1 3.600 0v1.500" fill="none" stroke="#e2e2e2" stroke-width=".9"/><rect x="943.700" y="321.800" width="1" height="1.800" fill="#555"/><rect x="1007.800" y="373.300" width="6.400" height="22.600" fill="#7e7e7e"/><path d="M1009.400 383.300h3.200l-1.600 2z" fill="#ececec"/><g fill="none" stroke="#c4c4c4" stroke-width=".9"><rect x="900.300" y="604.600" width="4" height="2.800" rx="1.400"/><rect x="903.500" y="604.600" width="4" height="2.800" rx="1.400"/></g><rect x="933.300" y="603.200" width="8" height="5.800" fill="#cacaca"/><circle cx="937.300" cy="606.100" r="1.700" fill="#535353"/><circle cx="953.200" cy="606" r="3.300" fill="none" stroke="#cacaca" stroke-width=".9"/><path d="M950.900 608.300a3.300 3.300 0 0 1 4.600-4.600z" fill="#cacaca"/><path d="M958 609h1.800l-.9 1.100z" fill="#cacaca"/><path d="M926 609h1.800l-.9 1.100z" fill="#cacaca"/><path d="M966 602.800h3l1 1.200h3.600v5h-7.600z" fill="#cacaca"/><path d="M983.200 602.300h6v6.600h-4.200v-2.200h-1.800z" fill="#cacaca"/><path d="M983.600 607.200l1.200 1.300" stroke="#535353" stroke-width=".5"/><g fill="#c6c6c6"><rect x="999.800" y="605" width="5.400" height="4.600" rx=".6"/><rect x="999.200" y="603.600" width="6.600" height="1"/><rect x="1001.400" y="602.600" width="2.200" height="1"/></g><g stroke="#555" stroke-width=".5"><path d="M1001.300 605.600v3.400M1002.500 605.600v3.400M1003.700 605.600v3.400"/></g></svg>
<svg width="1024" height="640" viewBox="0 0 1024 640"><defs><linearGradient id="gr" x1="0" y1="0" x2="1" y2="0"><stop offset="0" stop-color="#ededed"/><stop offset="1" stop-color="#5a5a5a"/></linearGradient><linearGradient id="rc" x1="0" y1="0" x2="0" y2="1"><stop offset="0" stop-color="#c9c9c9"/><stop offset="1" stop-color="#8a8a8a"/></linearGradient></defs><path d="M2.800 50.600l1.600 1.500-1.600 1.500zM5 50.600l1.600 1.500-1.600 1.500z" fill="#cfcfcf"/><path d="M30.800 52.800l2.400 2.400M33.200 52.800l-2.400 2.400" stroke="#d0d0d0" stroke-width=".7"/><rect x="6" y="57.800" width="12" height="1.600" fill="#3c3c3c"/><path d="M870.500 50.600l-1.600 1.500 1.600 1.500zM872.700 50.600l-1.600 1.500 1.600 1.500z" fill="#cfcfcf"/><path d="M1016.500 50.600l1.600 1.500-1.600 1.500zM1018.700 50.600l1.600 1.500-1.600 1.500z" fill="#cfcfcf"/><rect x="858" y="58.200" width="12" height="1.600" fill="#3c3c3c"/><rect x="858" y="83.200" width="12" height="1.600" fill="#3c3c3c"/><rect x="2.600" y="66" width="18.600" height="13.800" rx="1.500" fill="#3a3a3a" stroke="#2e2e2e" stroke-width=".6"/><g transform="translate(6.6,68.8) scale(1.0)" fill="#e4e4e4" stroke="none"><path d="M0 0 L0 6.800 L5.200 3.400 Z"/><path d="M6.399999999999999 6.0H11.0M8.7 3.7V8.3" stroke="#e4e4e4" stroke-width=".8" fill="none"/><path d="M5.499999999999999 6.0l1.300-1.100v2.200zM11.9 6.0l-1.300-1.100v2.200zM8.7 2.8000000000000003l-1.100 1.300h2.200zM8.7 9.200000000000001l-1.100-1.300h2.200z"/></g><rect x="7.200" y="84.6" width="8.600" height="8" fill="none" stroke="#dcdcdc" stroke-width="1" stroke-dasharray="2 1.200"/><path d="M19.500 92.39999999999999v2.200h-2.200z" fill="#c8c8c8"/><ellipse cx="11.800" cy="104.0" rx="5" ry="3.300" fill="none" stroke="#dcdcdc" stroke-width="1" transform="rotate(-12 11.800 104.8)"/><path d="M8.300 106.2c-1 .8-.6 2 .6 2.800" fill="none" stroke="#dcdcdc" stroke-width=".9"/><path d="M19.500 108.39999999999999v2.200h-2.200z" fill="#c8c8c8"/><ellipse cx="9.600" cy="122.39999999999999" rx="3.200" ry="2.400" fill="none" stroke="#bdbdbd" stroke-width=".8" stroke-dasharray="1.500 .8"/><path d="M16.800 116.2l-5 5.600" stroke="#dcdcdc" stroke-width="1.300"/><ellipse cx="10.800" cy="122.8" rx="2.200" ry="1.500" fill="#dcdcdc" transform="rotate(-40 10.800 122.8)"/><path d="M19.500 124.39999999999999v2.200h-2.200z" fill="#c8c8c8"/><path d="M9 131.20000000000002v8.600h8.400M6.400 133.8h8.400v8.600" fill="none" stroke="#dcdcdc" stroke-width="1.300"/><path d="M15.600 131.4l-2.400 2.400" stroke="#bcbcbc" stroke-width=".6"/><path d="M19.500 140.4v2.200h-2.200z" fill="#c8c8c8"/><path d="M7 157.4l1-2.600 4.400-4.600 1.600 1.600-4.400 4.600z" fill="#dcdcdc"/><path d="M12 149.4l3 3" stroke="#dcdcdc" stroke-width="1.400"/><path d="M14 149.8l1.800-2.200 1.400 1.400-2.200 1.800z" fill="#dcdcdc"/><path d="M19.500 156.4v2.200h-2.200z" fill="#c8c8c8"/><path d="M3.200 161.500h17.600" stroke="#3e3e3e" stroke-width=".8"/><g transform="rotate(-42 12 170.5)"><rect x="6.200" y="168.0" width="11.600" height="5" rx="2.400" fill="#dcdcdc"/><rect x="10" y="168.0" width="4" height="5" fill="#aaa"/></g><path d="M6.400 171.5v-5.400h5" fill="none" stroke="#aaa" stroke-width=".6"/><path d="M19.500 174.1v2.200h-2.200z" fill="#c8c8c8"/><path d="M16.800 181.5l-6 6.800" stroke="#dcdcdc" stroke-width="1.200"/><path d="M6.400 190.9c1.600 0 3.800-.4 4.800-2.200l-1.400-1.200c-.8 1.600-2 2.600-3.400 3.400z" fill="#dcdcdc"/><path d="M19.500 190.1v2.200h-2.200z" fill="#c8c8c8"/><circle cx="11.700" cy="198.9" r="1.900" fill="#dcdcdc"/><rect x="10.900" y="199.8" width="1.600" height="3.400" fill="#dcdcdc"/><rect x="7" y="202.9" width="9.400" height="2.400" fill="#dcdcdc"/><rect x="7" y="206.10000000000002" width="9.400" height="1" fill="#dcdcdc"/><path d="M19.500 205.9v2.200h-2.200z" fill="#c8c8c8"/><path d="M16.600 213.6l-5 6" stroke="#dcdcdc" stroke-width="1.100"/><path d="M7 222.2c1.400 0 3.400-.4 4.400-2l-1.300-1.100c-.8 1.400-1.900 2.400-3.100 3.100z" fill="#dcdcdc"/><path d="M7.400 215.2c1.600-2.400 5-2.600 6.600-.6" fill="none" stroke="#c4c4c4" stroke-width=".8"/><path d="M6.600 213.4l.4 2.600 2.400-.8z" fill="#c4c4c4"/><path d="M14.800 218.8c.6 1.400.2 2.800-.8 3.800" fill="none" stroke="#999" stroke-width=".6"/><path d="M19.500 221.6v2.200h-2.200z" fill="#c8c8c8"/><path d="M7 234.7l5-4.600h5l-5 4.600z" fill="#efefef"/><path d="M7 234.7h5v3h-5zM12 234.7l5-4.600v3l-5 4.600z" fill="#c4c4c4"/><path d="M19.500 237.29999999999998v2.200h-2.200z" fill="#c8c8c8"/><rect x="6.400" y="245.2" width="10.600" height="7.400" fill="url(#gr)" stroke="#dadada" stroke-width=".7"/><path d="M19.500 252.6v2.200h-2.200z" fill="#c8c8c8"/><path d="M11.600 260.2c1.400 2.200 3.400 4 3.400 6.200a3.400 3.400 0 0 1-6.800 0c0-2.200 2-4 3.400-6.200z" fill="#cfcfcf"/><path d="M19.500 268.6v2.200h-2.200z" fill="#c8c8c8"/><circle cx="9.800" cy="279" r="2.900" fill="#dadada"/><path d="M11.600 281l4.400 4" stroke="#dadada" stroke-width="1.300"/><path d="M19.500 284.6v2.200h-2.200z" fill="#c8c8c8"/><path d="M3.200 289.500h17.600" stroke="#3e3e3e" stroke-width=".8"/><path d="M6.600 303.1l1.400-5.600 4.400-3 3.600 3.400-3.200 4.200z" fill="none" stroke="#dcdcdc" stroke-width="1"/><path d="M6.800 302.9l3.800-3.600" stroke="#dcdcdc" stroke-width=".7"/><circle cx="11" cy="298.9" r=".8" fill="#dcdcdc"/><path d="M12.800 293.7l4 3.800" stroke="#dcdcdc" stroke-width="1.600"/><path d="M19.500 302.1v2.200h-2.200z" fill="#c8c8c8"/><path d="M8.400 325.5v9l2.200-2 1.600 3.400 1.500-.7-1.600-3.300h3z" fill="#1e1e1e" stroke="#dadada" stroke-width=".8"/><path d="M19.500 334.1v2.200h-2.200z" fill="#c8c8c8"/><rect x="7" y="342.7" width="9.400" height="7" fill="url(#rc)" stroke="#dcdcdc" stroke-width=".7"/><path d="M19.500 349.90000000000003v2.200h-2.200z" fill="#c8c8c8"/><path d="M3.200 355h17.600" stroke="#3e3e3e" stroke-width=".8"/><path d="M8.600 369.5c-1-1.400-2.400-3-2.800-4.200.6-.6 1.400-.2 2.200.8v-5c0-.8 1.200-.8 1.200 0v-1c0-.8 1.300-.8 1.300 0v.4c0-.8 1.300-.8 1.300 0v.8c0-.7 1.200-.7 1.200 0v4.600c0 1.400-.6 2.600-1 3.600z" fill="#d8d8d8"/><path d="M19.500 368.1v2.200h-2.200z" fill="#c8c8c8"/><circle cx="9.600" cy="378.1" r="3" fill="#9a9a9a" stroke="#d6d6d6" stroke-width="1"/><path d="M11.800 380.3l4.200 4" stroke="#d6d6d6" stroke-width="1.500"/><rect x="4.300" y="391.700" width="4.400" height="4" fill="#d8d8d8" stroke="#333" stroke-width=".4"/><rect x="2.700" y="389.400" width="4" height="4" fill="#0a0a0a" stroke="#e4e4e4" stroke-width=".7"/><path d="M14 391.200h3.600v3.600" fill="none" stroke="#dadada" stroke-width=".8"/><path d="M14.200 389.600v3.200l-1.800-1.600zM16 394.400h3.200l-1.600 1.800z" fill="#dadada"/><rect x="9" y="405" width="11.300" height="11.400" fill="#fff" stroke="#ccc" stroke-width=".5"/><rect x="2.700" y="399.100" width="11.300" height="11.300" fill="#3a80c9" stroke="#efefef" stroke-width="1"/><rect x="2.100" y="398.500" width="12.500" height="12.500" fill="none" stroke="#3a3a3a" stroke-width=".5"/><rect x="6.200" y="422.200" width="10.600" height="8" fill="#3c3c3c" stroke="#cfcfcf" stroke-width=".8"/><circle cx="11.500" cy="426.200" r="2.200" fill="none" stroke="#bdbdbd" stroke-width=".7" stroke-dasharray="1 .7"/><rect x="6.200" y="440" width="8" height="6.200" fill="#6a6a6a" stroke="#cfcfcf" stroke-width=".7"/><rect x="8.800" y="437.800" width="8.400" height="6.200" fill="#8a8a8a" stroke="#cfcfcf" stroke-width=".7"/><path d="M19.500 446.6v2.200h-2.200z" fill="#c8c8c8"/><g fill="none" stroke="#d6d6d6" stroke-width=".9"><rect x="860.400" y="65" width="3" height="2.400"/><rect x="860.400" y="69" width="3" height="2.400"/></g><rect x="860" y="72.800" width="3.800" height="2.800" fill="#d6d6d6"/><path d="M866.200 66.600c3 .4 4 3.400 1.600 7.600" fill="none" stroke="#e0e0e0" stroke-width="1.300"/><path d="M864.600 66.600l2.800-2v3.800z" fill="#e0e0e0"/><path d="M860.200 91.800l2.800-1.500 2.800 1.500v3.400l-2.800 1.500-2.800-1.500z" fill="#8a8a8a" stroke="#e0e0e0" stroke-width="1"/><path d="M860.200 91.800l2.600 1.400 2.600-1.400M862.800 93.200v3" fill="none" stroke="#d4d4d4" stroke-width=".6"/><rect x="867" y="90.400" width="1.800" height="3" fill="#dcdcdc"/><rect x="867" y="94.600" width="1.800" height="2.400" fill="#dcdcdc"/><rect x="860" y="98.400" width="9" height="1.800" fill="#e4e4e4"/><path d="M869 100.600v1.600h-1.600z" fill="#c8c8c8"/><g fill="#c4c4c4"><rect x="1016" y="60.2" width="5" height="1"/><rect x="1016" y="62.0" width="5" height="1"/><rect x="1016" y="63.800000000000004" width="5" height="1"/><path d="M1012.400 61.400000000000006h2.400l-1.200 1.400z"/></g><g fill="#c4c4c4"><rect x="1016" y="137.6" width="5" height="1"/><rect x="1016" y="139.4" width="5" height="1"/><rect x="1016" y="141.2" width="5" height="1"/><path d="M1012.400 138.79999999999998h2.400l-1.200 1.400z"/></g><g fill="#c4c4c4"><rect x="1016" y="272.2" width="5" height="1"/><rect x="1016" y="274.0" width="5" height="1"/><rect x="1016" y="275.8" width="5" height="1"/><path d="M1012.400 273.4h2.400l-1.200 1.400z"/></g></svg>
<div class="b" style="left:389.00px;top:611.20px;width:245.80px;height:28.80px;background:rgba(101,107,104,0.95);border-radius:2.500px 2.500px 0 0;border-top:0.6px solid rgba(160,165,160,.6);"></div>
<svg width="1024" height="640" viewBox="0 0 1024 640"><defs><linearGradient id="fnL" x1="0" y1="0" x2="0" y2="1"><stop offset="0" stop-color="#34a7f3"/><stop offset="1" stop-color="#2b6fe8"/></linearGradient><linearGradient id="lp" x1="0" y1="0" x2="0" y2="1"><stop offset="0" stop-color="#c9ced2"/><stop offset="1" stop-color="#7d8489"/></linearGradient><linearGradient id="sf" x1="0" y1="0" x2="0" y2="1"><stop offset="0" stop-color="#3fb1f4"/><stop offset="1" stop-color="#2b62dd"/></linearGradient><linearGradient id="sp" x1="0" y1="0" x2="0" y2="1"><stop offset="0" stop-color="#c6c9cc"/><stop offset="1" stop-color="#8e9296"/></linearGradient><linearGradient id="tr" x1="0" y1="0" x2="1" y2="0"><stop offset="0" stop-color="#c9cccd"/><stop offset=".5" stop-color="#eef0f0"/><stop offset="1" stop-color="#c2c5c6"/></linearGradient><filter id="bl2"><feGaussianBlur stdDeviation="0.3"/></filter></defs><g filter="url(#bl2)"><rect x="393.300" y="616.200" width="9.200" height="16.800" fill="url(#fnL)"/><path d="M402.500 616.200h8.700v16.800h-8.700z" fill="#eef0f3"/><path d="M402.800 616.200c-1.400 4-1.800 7-1.600 9.400h2.200c-.2 2.400 0 5 .6 7.400" fill="none" stroke="#3a4a66" stroke-width=".5"/><path d="M396.300 627c3 2.600 9 2.600 12 0" fill="none" stroke="#1d3a66" stroke-width=".9"/><path d="M398.200 620v2.200M406.600 620v2.200" stroke="#1d3a66" stroke-width=".9"/><circle cx="425.300" cy="624.500" r="9.400" fill="url(#lp)" stroke="#e2e5e7" stroke-width=".7"/><path d="M430.400 618.600c-3.600.2-6.800 3-8.800 6.800l2.400 2.400c3.800-2 6.400-5.400 6.400-9.200z" fill="#4a4f55"/><path d="M421.800 625.200l-2.800.6 2-2.600zM424.200 628l-.6 2.800 2.600-2z" fill="#4a4f55"/><path d="M421.400 628.200l-1.600 2.200 2.400-.8z" fill="#5a5f66"/><circle cx="448.700" cy="624.500" r="9.500" fill="url(#sf)" stroke="#e6e8ea" stroke-width="1"/><path d="M454.400 618.600l-4.600 7-2.200-2z" fill="#f24a3c"/><path d="M443 630.400l4.600-6.800 2.200 2z" fill="#f4f4f4"/><g transform="rotate(-6 471.300 624.500)"><rect x="463.600" y="616.200" width="15.600" height="16.400" rx="1" fill="#f7f7f7"/><path d="M463.600 617.200a1 1 0 0 1 1-1h13.600a1 1 0 0 1 1 1v3.600h-15.600z" fill="#e8443a"/></g><rect x="485.600" y="616.400" width="18.400" height="16" rx=".8" fill="#1c1c1c" stroke="#4a4a4a" stroke-width=".8"/><path d="M488 619l2 1.300-2 1.300" fill="none" stroke="#e6e6e6" stroke-width=".6"/><path d="M490.600 622h2.200" stroke="#e6e6e6" stroke-width=".6"/><g transform="rotate(-5 518.500 624.300)"><rect x="511" y="615.600" width="15" height="17.600" rx=".8" fill="#fbf9ee" stroke="#d8c050" stroke-width=".5"/><path d="M511 616.400a.8.800 0 0 1 .8-.8h13.400a.8.800 0 0 1 .8.800v2.600h-15z" fill="#f5d34a"/></g><rect x="532" y="616" width="19" height="17" rx="1" fill="url(#sp)"/><circle cx="541.500" cy="624.500" r="6.600" fill="#5a5d60" stroke="#2e3032" stroke-width="1.400"/><circle cx="541.500" cy="624.500" r="4.200" fill="#9ea2a6"/><path d="M541.500 624.500v-4.400M541.500 624.500l3.800 2.200M541.500 624.500l-3.800 2.200" stroke="#3a3c3f" stroke-width="1.200"/><circle cx="541.500" cy="624.500" r="1.100" fill="#3a3c3f"/><rect x="554.800" y="615" width="19.200" height="18.500" fill="#0f0d2a" stroke="#4fc0ee" stroke-width="1"/><path d="M581.300 615v21" stroke="#494d4b" stroke-width=".8"/><path d="M593 614.600h6.600l3 3v6h-9.600z" fill="#f1f1f1"/><rect x="597.400" y="616.200" width="3.400" height="3" fill="#555"/><path d="M589 620.400a1 1 0 0 1 1-1h5.400l1.400 1.400h10.400a1 1 0 0 1 1 1v10.400a.8.800 0 0 1-.8.800h-17.600a.8.800 0 0 1-.8-.8z" fill="#6fbdf0"/><path d="M589 621.800h19.200v10.400a.8.800 0 0 1-.8.800h-17.600a.8.800 0 0 1-.8-.8z" fill="#7cc6f4"/><path d="M614 616.600c0-1.400 15.600-1.400 15.600 0l-1.800 16c-.2 2-11.800 2-12 0z" fill="url(#tr)"/><ellipse cx="621.800" cy="616.600" rx="7.800" ry="1.400" fill="#dfe2e3" stroke="#b4b8b9" stroke-width=".5"/></g><circle cx="402.200" cy="637.600" r=".9" fill="#0a0a0a"/><circle cx="564.400" cy="637.600" r=".9" fill="#0a0a0a"/></svg>
<svg width="1024" height="640" viewBox="0 0 1024 640" style="z-index:50"><text class="f" x="33.00" y="9.50" font-size="8.70" fill="#2b2422" font-weight="bold" letter-spacing="0.041">Photoshop</text><text class="f" x="90.60" y="9.50" font-size="8.70" fill="#2b2422" letter-spacing="-0.290">File</text><text class="f" x="115.60" y="9.50" font-size="8.70" fill="#2b2422" letter-spacing="0.136">Edit</text><text class="f" x="142.40" y="9.50" font-size="8.70" fill="#2b2422" letter-spacing="-0.020">Image</text><text class="f" x="178.60" y="9.50" font-size="8.70" fill="#2b2422" letter-spacing="-0.116">Layer</text><text class="f" x="212.00" y="9.50" font-size="8.70" fill="#2b2422" letter-spacing="-0.320">Type</text><text class="f" x="241.50" y="9.50" font-size="8.70" fill="#2b2422" letter-spacing="0.014">Select</text><text class="f" x="277.90" y="9.50" font-size="8.70" fill="#2b2422" letter-spacing="-0.047">Filter</text><text class="f" x="308.75" y="9.50" font-size="8.70" fill="#2b2422" letter-spacing="-0.371">3D</text><text class="f" x="331.00" y="9.50" font-size="8.70" fill="#2b2422" letter-spacing="-0.167">View</text><text class="f" x="361.00" y="9.50" font-size="8.70" fill="#2b2422" letter-spacing="0.111">Window</text><text class="f" x="404.00" y="9.50" font-size="8.70" fill="#2b2422" letter-spacing="0.202">Help</text><text class="f" x="887.90" y="9.50" font-size="8.70" fill="#3a3a40" letter-spacing="0.051">Thu Oct 16</text><text class="f" x="937.00" y="9.50" font-size="8.70" fill="#3a3a40" letter-spacing="0.050">4:37 PM</text><text class="f" x="462.00" y="24.25" font-size="8.13" fill="#ececec">Adobe Photoshop CC 2014</text><text class="f" x="53.00" y="40.30" font-size="6.68" fill="#e4e4e4">Auto-Select:</text><text class="f" x="97.50" y="40.30" font-size="6.51" fill="#e4e4e4">Group</text><text class="f" x="144.90" y="40.30" font-size="6.59" fill="#e4e4e4">Show Transform Controls</text><text class="f" x="452.75" y="40.30" font-size="6.57" fill="#9a9a9a">3D Mode:</text><text class="f" x="949.00" y="39.90" font-size="6.47" fill="#e4e4e4">Essentials</text><text class="f" x="40.00" y="56.90" font-size="7.00" fill="#f0f0f0" font-weight="bold">Adobe_PLAY_Comps.psd @ 33.3% (headphones_green, RGB/8) *</text><text class="f" x="50.58" y="67.60" font-size="6.60" fill="#d8d8d8">24</text><text class="f" x="72.19" y="67.60" font-size="6.60" fill="#d8d8d8">22</text><text class="f" x="93.80" y="67.60" font-size="6.60" fill="#d8d8d8">20</text><text class="f" x="115.41" y="67.60" font-size="6.60" fill="#d8d8d8">18</text><text class="f" x="137.02" y="67.60" font-size="6.60" fill="#d8d8d8">16</text><text class="f" x="158.63" y="67.60" font-size="6.60" fill="#d8d8d8">14</text><text class="f" x="180.24" y="67.60" font-size="6.60" fill="#d8d8d8">12</text><text class="f" x="201.85" y="67.60" font-size="6.60" fill="#d8d8d8">10</text><text class="f" x="223.46" y="67.60" font-size="6.60" fill="#d8d8d8">8</text><text class="f" x="245.07" y="67.60" font-size="6.60" fill="#d8d8d8">6</text><text class="f" x="266.68" y="67.60" font-size="6.60" fill="#d8d8d8">4</text><text class="f" x="288.29" y="67.60" font-size="6.60" fill="#d8d8d8">2</text><text class="f" x="309.90" y="67.60" font-size="6.60" fill="#d8d8d8">0</text><text class="f" x="331.51" y="67.60" font-size="6.60" fill="#d8d8d8">2</text><text class="f" x="353.12" y="67.60" font-size="6.60" fill="#d8d8d8">4</text><text class="f" x="374.73" y="67.60" font-size="6.60" fill="#d8d8d8">6</text><text class="f" x="396.34" y="67.60" font-size="6.60" fill="#d8d8d8">8</text><text class="f" x="417.95" y="67.60" font-size="6.60" fill="#d8d8d8">10</text><text class="f" x="439.56" y="67.60" font-size="6.60" fill="#d8d8d8">12</text><text class="f" x="461.17" y="67.60" font-size="6.60" fill="#d8d8d8">14</text><text class="f" x="482.78" y="67.60" font-size="6.60" fill="#d8d8d8">16</text><text class="f" x="504.39" y="67.60" font-size="6.60" fill="#d8d8d8">18</text><text class="f" x="526.00" y="67.60" font-size="6.60" fill="#d8d8d8">20</text><text class="f" x="547.61" y="67.60" font-size="6.60" fill="#d8d8d8">22</text><text class="f" x="569.22" y="67.60" font-size="6.60" fill="#d8d8d8">24</text><text class="f" x="590.83" y="67.60" font-size="6.60" fill="#d8d8d8">26</text><text class="f" x="612.44" y="67.60" font-size="6.60" fill="#d8d8d8">28</text><text class="f" x="634.05" y="67.60" font-size="6.60" fill="#d8d8d8">30</text><text class="f" x="655.66" y="67.60" font-size="6.60" fill="#d8d8d8">32</text><text class="f" x="677.27" y="67.60" font-size="6.60" fill="#d8d8d8">34</text><text class="f" x="698.88" y="67.60" font-size="6.60" fill="#d8d8d8">36</text><text class="f" x="720.49" y="67.60" font-size="6.60" fill="#d8d8d8">38</text><text class="f" x="742.10" y="67.60" font-size="6.60" fill="#d8d8d8">40</text><text class="f" x="763.71" y="67.60" font-size="6.60" fill="#d8d8d8">42</text><text class="f" x="785.32" y="67.60" font-size="6.60" fill="#d8d8d8">44</text><text class="f" x="806.93" y="67.60" font-size="6.60" fill="#d8d8d8">46</text><text class="f" x="828.54" y="67.60" font-size="6.60" fill="#d8d8d8">48</text><text class="f" x="25.40" y="93.67" font-size="6.60" fill="#d8d8d8">6</text><text class="f" x="25.40" y="115.28" font-size="6.60" fill="#d8d8d8">4</text><text class="f" x="25.40" y="136.89" font-size="6.60" fill="#d8d8d8">2</text><text class="f" x="25.40" y="158.50" font-size="6.60" fill="#d8d8d8">0</text><text class="f" x="25.40" y="180.11" font-size="6.60" fill="#d8d8d8">2</text><text class="f" x="25.40" y="201.72" font-size="6.60" fill="#d8d8d8">4</text><text class="f" x="25.40" y="223.33" font-size="6.60" fill="#d8d8d8">6</text><text class="f" x="25.40" y="244.94" font-size="6.60" fill="#d8d8d8">8</text><text class="f" x="25.40" y="266.55" font-size="6.60" fill="#d8d8d8">1</text><text class="f" x="25.40" y="272.70" font-size="6.60" fill="#d8d8d8">0</text><text class="f" x="25.40" y="288.16" font-size="6.60" fill="#d8d8d8">1</text><text class="f" x="25.40" y="294.31" font-size="6.60" fill="#d8d8d8">2</text><text class="f" x="25.40" y="309.77" font-size="6.60" fill="#d8d8d8">1</text><text class="f" x="25.40" y="315.92" font-size="6.60" fill="#d8d8d8">4</text><text class="f" x="25.40" y="331.38" font-size="6.60" fill="#d8d8d8">1</text><text class="f" x="25.40" y="337.53" font-size="6.60" fill="#d8d8d8">6</text><text class="f" x="25.40" y="352.99" font-size="6.60" fill="#d8d8d8">1</text><text class="f" x="25.40" y="359.14" font-size="6.60" fill="#d8d8d8">8</text><text class="f" x="25.40" y="374.60" font-size="6.60" fill="#d8d8d8">2</text><text class="f" x="25.40" y="380.75" font-size="6.60" fill="#d8d8d8">0</text><text class="f" x="25.40" y="396.21" font-size="6.60" fill="#d8d8d8">2</text><text class="f" x="25.40" y="402.36" font-size="6.60" fill="#d8d8d8">2</text><text class="f" x="25.40" y="417.82" font-size="6.60" fill="#d8d8d8">2</text><text class="f" x="25.40" y="423.97" font-size="6.60" fill="#d8d8d8">4</text><text class="f" x="25.40" y="439.43" font-size="6.60" fill="#d8d8d8">2</text><text class="f" x="25.40" y="445.58" font-size="6.60" fill="#d8d8d8">6</text><text class="f" x="25.40" y="461.04" font-size="6.60" fill="#d8d8d8">2</text><text class="f" x="25.40" y="467.19" font-size="6.60" fill="#d8d8d8">8</text><text class="f" x="25.40" y="482.65" font-size="6.60" fill="#d8d8d8">3</text><text class="f" x="25.40" y="488.80" font-size="6.60" fill="#d8d8d8">0</text><text class="f" x="25.40" y="504.26" font-size="6.60" fill="#d8d8d8">3</text><text class="f" x="25.40" y="510.41" font-size="6.60" fill="#d8d8d8">2</text><text class="f" x="25.40" y="525.87" font-size="6.60" fill="#d8d8d8">3</text><text class="f" x="25.40" y="532.02" font-size="6.60" fill="#d8d8d8">4</text><text class="f" x="25.40" y="547.48" font-size="6.60" fill="#d8d8d8">3</text><text class="f" x="25.40" y="553.63" font-size="6.60" fill="#d8d8d8">6</text><text class="f" x="25.40" y="569.09" font-size="6.60" fill="#d8d8d8">3</text><text class="f" x="25.40" y="575.24" font-size="6.60" fill="#d8d8d8">8</text><text class="f" x="25.40" y="590.70" font-size="6.60" fill="#d8d8d8">4</text><text class="f" x="25.40" y="596.85" font-size="6.60" fill="#d8d8d8">0</text><text class="f" x="31.50" y="607.50" font-size="6.63" fill="#e4e4e4">33.33%</text><text class="f" x="95.60" y="607.50" font-size="6.78" fill="#e4e4e4">Doc: 6.64M/115.0M</text><text class="f" x="327.90" y="196.70" font-size="16.00" fill="#f7efe2" font-weight="bold" stroke="#f7efe2" stroke-width="0.9" stroke-linejoin="round" transform="translate(0 196.7) scale(1 1.24) translate(0 -196.7)">PLAY</text><text class="f" x="393.10" y="208.65" font-size="10.16" fill="#cdcdcd">here along with</text><text class="f" x="393.10" y="196.40" font-size="10.16" fill="#cdcdcd">Add your </text><text class="f" x="437.40" y="196.40" font-size="10.16" fill="#ffffff" letter-spacing="0.034">hero text</text><text class="f" x="393.10" y="220.90" font-size="10.16" fill="#cdcdcd" letter-spacing="0.026">whatever else you</text><text class="f" x="393.10" y="233.15" font-size="10.16" fill="#cdcdcd" letter-spacing="0.035">want to call</text><text class="f" x="393.10" y="245.40" font-size="10.16" fill="#ffffff">attention to</text><text class="f" x="443.60" y="245.40" font-size="10.16" fill="#cdcdcd">.</text><text class="f" x="447.00" y="293.20" font-size="4.97" fill="#f2f2f2">Call to Action</text><text class="f" x="446.60" y="302.80" font-size="4.44" fill="#a2a2a2">Add action statement,</text><text class="f" x="446.60" y="308.05" font-size="4.46" fill="#a2a2a2">and click through to</text><text class="f" x="446.60" y="313.30" font-size="4.45" fill="#a2a2a2">deeper levels of</text><text class="f" x="446.60" y="318.55" font-size="4.30" fill="#a2a2a2">content.</text><text class="f" x="881.40" y="63.80" font-size="6.36" fill="#f4f4f4" font-weight="bold">Color</text><text class="f" x="906.00" y="63.80" font-size="6.29" fill="#d2d2d2" font-weight="bold">Swatches</text><text class="f" x="881.50" y="141.10" font-size="6.51" fill="#f4f4f4" font-weight="bold">Libraries</text><text class="f" x="917.00" y="141.10" font-size="6.52" fill="#d2d2d2" font-weight="bold">Adjustments</text><text class="f" x="964.60" y="141.10" font-size="6.25" fill="#d2d2d2" font-weight="bold">Styles</text><text class="f" x="888.60" y="154.80" font-size="6.37" fill="#f2f2f2" font-weight="bold">Sample</text><text class="f" x="893.00" y="178.00" font-size="19.60" fill="#111" letter-spacing="-0.974">Aa</text><text class="f" x="935.25" y="178.50" font-size="20.80" fill="#1a1a1a" letter-spacing="-2.292">Aa</text><text class="f" x="883.40" y="197.50" font-size="6.96" fill="#c8c8c8">Graphics</text><text class="f" x="885.90" y="246.60" font-size="6.76" fill="#15151f" font-weight="bold">headphones_gr...</text><text class="fs" x="899.20" y="263.00" font-size="12.77" fill="#a8a8a8">T</text><text class="fs" x="914.50" y="262.60" font-size="9.70" fill="#9a9a9a" font-style="italic">fx</text><text class="f" x="881.50" y="275.60" font-size="6.20" fill="#f4f4f4" font-weight="bold">Layers</text><text class="f" x="910.00" y="275.60" font-size="6.39" fill="#d2d2d2" font-weight="bold">Channels</text><text class="f" x="947.00" y="275.60" font-size="6.33" fill="#d2d2d2" font-weight="bold">Paths</text><text class="f" x="892.50" y="289.40" font-size="6.37" fill="#e4e4e4">Kind</text><text class="f" x="883.75" y="306.30" font-size="6.59" fill="#e4e4e4">Normal</text><text class="f" x="960.90" y="306.30" font-size="6.57" fill="#e4e4e4">Opacity:</text><text class="f" x="880.00" y="323.60" font-size="6.65" fill="#e4e4e4">Lock:</text><text class="f" x="975.00" y="323.60" font-size="6.43" fill="#e4e4e4">Fill:</text><text class="f" x="990.00" y="306.60" font-size="6.49" fill="#e4e4e4">100%</text><text class="f" x="990.00" y="323.60" font-size="6.49" fill="#e4e4e4">100%</text><text class="f" x="921.50" y="340.70" font-size="6.52" fill="#f0f0f0">Small Screen</text><text class="f" x="931.25" y="354.85" font-size="6.40" fill="#f0f0f0">Row 1</text><text class="f" x="940.90" y="368.90" font-size="6.69" fill="#f0f0f0">Call to Action 1</text><text class="f" x="951.00" y="387.80" font-size="5.93" fill="#ececec">Add your hero t...</text><text class="fs" x="932.00" y="389.00" font-size="14.73" fill="#ececec">T</text><text class="fs" x="999.20" y="387.60" font-size="8.04" fill="#ececec" font-style="italic">fx</text><text class="f" x="946.50" y="411.75" font-size="6.78" fill="#f0f0f0">cta back</text><text class="f" x="940.60" y="430.80" font-size="6.47" fill="#f0f0f0">Images 1</text><text class="f" x="946.60" y="449.60" font-size="6.40" fill="#f0f0f0">PLAY_Logo</text><text class="f" x="946.60" y="473.05" font-size="6.33" fill="#f0f0f0">person_1</text><text class="f" x="946.60" y="496.75" font-size="6.57" fill="#f0f0f0">keyboard_blue</text><text class="f" x="946.60" y="520.70" font-size="6.43" fill="#f0f0f0">headphones_green</text><text class="f" x="931.25" y="539.70" font-size="6.61" fill="#f0f0f0">Row 2</text><text class="f" x="940.60" y="553.75" font-size="6.81" fill="#f0f0f0">Call to Action 2</text><text class="f" x="940.60" y="567.70" font-size="6.61" fill="#f0f0f0">Images 2</text><text class="f" x="926.50" y="586.65" font-size="6.64" fill="#f0f0f0">Container</text><text class="fs" x="917.50" y="608.30" font-size="8.31" fill="#d0d0d0" font-style="italic">fx</text><text class="fs" x="970.75" y="289.75" font-size="10.64" fill="#d6d6d6">T</text><text class="fs" x="7.60" y="319.00" font-size="13.75" fill="#e2e2e2">T</text><text class="f" x="467.80" y="619.70" font-size="3.22" fill="#fde8e4">OCT</text><text class="f" x="467.00" y="629.60" font-size="10.00" fill="#3a3a3a" letter-spacing="-1.523">16</text><text class="f" x="557.60" y="629.00" font-size="12.50" fill="#55c4f0" letter-spacing="-0.588">Ps</text></svg>
</body></html>
